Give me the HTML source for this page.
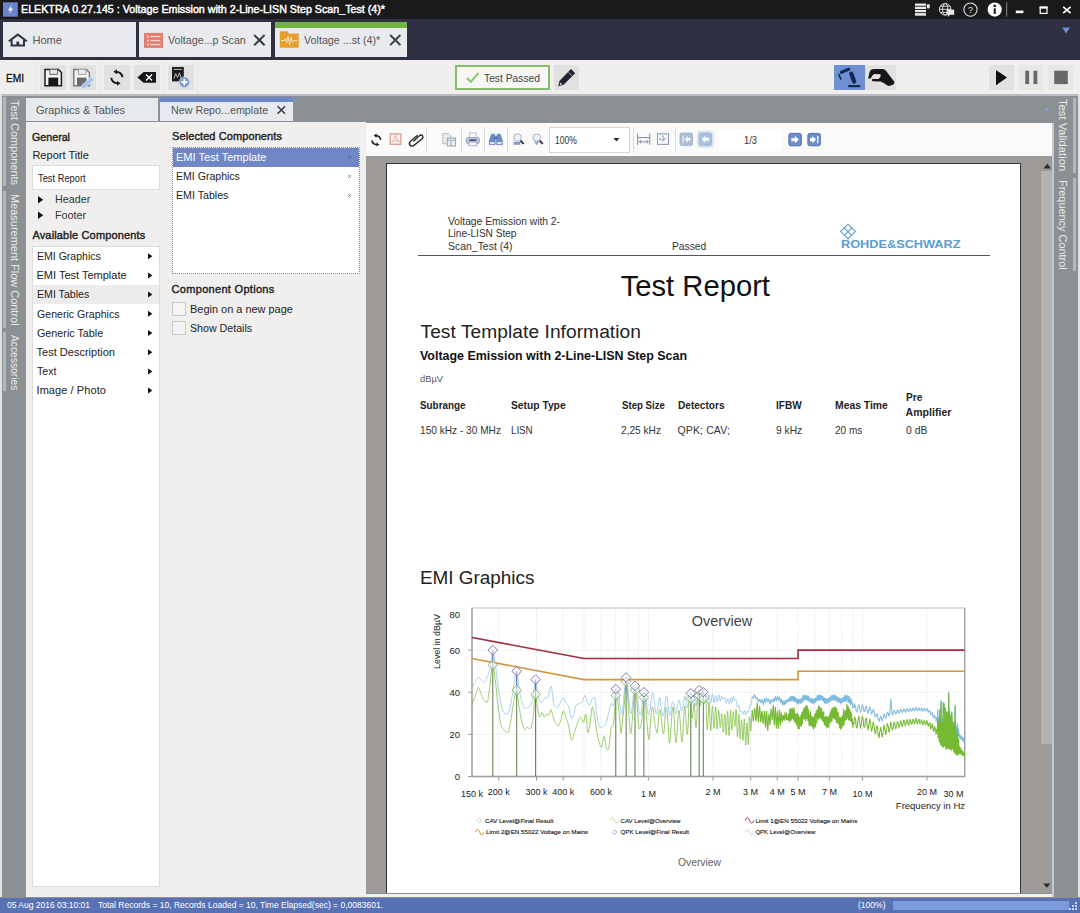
<!DOCTYPE html>
<html>
<head>
<meta charset="utf-8">
<title>ELEKTRA</title>
<style>
*{box-sizing:border-box;margin:0;padding:0}
html,body{width:1080px;height:913px;overflow:hidden;background:#8b9094;font-family:"Liberation Sans",sans-serif;color:#222}
.abs{position:absolute}
#app{position:relative;width:1080px;height:913px;overflow:hidden}
.tx{position:absolute;white-space:nowrap;font-family:"Liberation Sans",sans-serif}
.bx{position:absolute}
.vt{position:absolute;white-space:nowrap;color:#e9ecef;font-size:12.5px;line-height:14px;transform-origin:0 0;transform:rotate(90deg)}
.tri{position:absolute;width:0;height:0;border-left:5px solid #111;border-top:3.5px solid transparent;border-bottom:3.5px solid transparent}
.sep{position:absolute;width:1px;background:#dcdcdc}
.hd{position:absolute;width:3px;background:#b3b8bd}
</style>
</head>
<body>
<div id="app">

<!-- ===== window chrome ===== -->
<div class="bx" style="left:0;top:0;width:1080px;height:19px;background:#1a1a1c"></div>
<div class="bx" style="left:0;top:19px;width:1080px;height:41px;background:#2f3142"></div>
<div class="bx" style="left:0;top:59.7px;width:1080px;height:34.3px;background:#f0efed"></div>
<div class="bx" style="left:0;top:94px;width:1080px;height:803px;background:#8b9094"></div>
<div class="bx" style="left:0;top:897.5px;width:1080px;height:15.5px;background:#5871b4"></div>

<div class="bx" style="left:0;top:94px;width:1080px;height:2px;background:#b9bdc1"></div>
<!-- top tabs -->
<div class="bx" style="left:3px;top:22px;width:133px;height:34.5px;background:#e8eaed"></div>
<div class="bx" style="left:139px;top:22px;width:132px;height:34.5px;background:#e8eaed"></div>
<div class="bx" style="left:275px;top:22px;width:132px;height:34.5px;background:#e8eaed"></div>
<div class="bx" style="left:275px;top:22px;width:132px;height:6px;background:#6fb53f"></div>

<!-- toolbar buttons -->
<div class="bx" style="left:40px;top:65px;width:26px;height:25px;background:#e0e1e0"></div>
<div class="bx" style="left:70px;top:65px;width:26px;height:25px;background:#e0e1e0"></div>
<div class="bx" style="left:104px;top:65px;width:26px;height:25px;background:#e0e1e0"></div>
<div class="bx" style="left:134px;top:65px;width:26px;height:25px;background:#e0e1e0"></div>
<div class="bx" style="left:168px;top:65px;width:26px;height:25px;background:#e0e1e0"></div>
<div class="sep" style="left:36px;top:61px;height:32px;background:#e4e4e3"></div>
<div class="sep" style="left:100px;top:61px;height:32px;background:#e4e4e3"></div>
<div class="sep" style="left:164px;top:61px;height:32px;background:#e4e4e3"></div>
<div class="sep" style="left:197px;top:61px;height:32px;background:#e4e4e3"></div>
<div class="bx" style="left:455px;top:65px;width:95px;height:25px;background:#f5f6f5;border:2px solid #88bb6c"></div>
<div class="bx" style="left:554px;top:65px;width:25px;height:25px;background:#e0e1e0"></div>
<div class="bx" style="left:834px;top:65px;width:31px;height:25px;background:#6e90d2"></div>
<div class="bx" style="left:865px;top:65px;width:31px;height:25px;background:#e0e1e0"></div>
<div class="bx" style="left:989px;top:65px;width:25px;height:25px;background:#e0e1e0"></div>
<div class="bx" style="left:1018px;top:65px;width:25px;height:25px;background:#e7e7e5"></div>
<div class="bx" style="left:1048px;top:65px;width:25px;height:25px;background:#e7e7e5"></div>

<!-- ===== left strip ===== -->
<div class="bx" style="left:0;top:94px;width:2px;height:803px;background:#dfe1e3"></div>
<div class="hd" style="left:3px;top:97px;height:89px"></div>
<div class="hd" style="left:3px;top:191px;height:137px"></div>
<div class="hd" style="left:3px;top:332px;height:59px"></div>

<!-- ===== left panel ===== -->
<div class="bx" style="left:26px;top:122px;width:340px;height:775px;background:#f0efee"></div>
<div class="bx" style="left:26px;top:97px;width:133px;height:25px;background:#e6e9ed;border:1px solid #8b9094;border-left:none"></div>
<div class="bx" style="left:160px;top:97px;width:133px;height:25px;background:#e6e9ed;border-bottom:1px solid #8b9094"></div>
<div class="bx" style="left:160px;top:97px;width:133px;height:5px;background:#7087c7"></div>
<div class="bx" style="left:32px;top:165px;width:128px;height:25px;background:#fff;border:1px solid #dcdcdc"></div>
<div class="bx" style="left:32px;top:246px;width:128px;height:641px;background:#fff;border:1px solid #dcdcdc"></div>
<div class="bx" style="left:33px;top:285px;width:126px;height:19px;background:#ececec"></div>
<div class="bx" style="left:172px;top:147px;width:188px;height:127px;background:#fff;border:1px dotted #8a8a9a"></div>
<div class="bx" style="left:173px;top:148px;width:186px;height:19px;background:#7087c7"></div>
<div class="bx" style="left:172px;top:302px;width:14px;height:14px;background:#f4f4f4;border:1px solid #c9c9c9"></div>
<div class="bx" style="left:172px;top:321px;width:14px;height:14px;background:#f4f4f4;border:1px solid #c9c9c9"></div>

<!-- ===== report viewer ===== -->
<div class="bx" style="left:366px;top:123px;width:686px;height:33px;background:#fafafa"></div>
<div class="bx" style="left:366px;top:156px;width:686px;height:737px;background:#9e9a97"></div>
<div class="bx" style="left:366px;top:893.7px;width:686px;height:3.8px;background:#eef0ee"></div>
<div class="bx" style="left:386px;top:163px;width:635px;height:730px;background:#fff;border:1px solid #333;border-bottom:none"></div>
<div class="bx" style="left:1041px;top:171px;width:10.5px;height:573px;background:#b6b2af"></div>
<div class="bx" style="left:1052px;top:123px;width:1.5px;height:774px;background:#c5c8cc"></div>
<div class="bx" style="left:549px;top:127px;width:81px;height:26px;background:#fff;border:1px solid #d5d5d5"></div>
<div class="bx" style="left:718px;top:130px;width:64px;height:19px;background:#fff"></div>
<div class="sep" style="left:426px;top:127px;height:26px"></div>
<div class="sep" style="left:461px;top:127px;height:26px"></div>
<div class="sep" style="left:484px;top:127px;height:26px"></div>
<div class="sep" style="left:507px;top:127px;height:26px"></div>
<div class="sep" style="left:633px;top:127px;height:26px"></div>
<div class="sep" style="left:675px;top:127px;height:26px"></div>
<!-- page header rule -->
<div class="bx" style="left:418px;top:255px;width:572px;height:1px;background:#555"></div>

<!-- ===== right strip ===== -->
<div class="bx" style="left:1077.5px;top:94px;width:2.5px;height:803px;background:#dfe1e3"></div>
<div class="hd" style="left:1073px;top:98px;height:75px"></div>
<div class="hd" style="left:1073px;top:178px;height:93px"></div>

<!-- ===== status bar progress ===== -->
<div class="bx" style="left:893px;top:901px;width:176px;height:9px;background:#7b9bdc"></div>

<svg class="abs" style="left:0;top:0" width="1080" height="913" viewBox="0 0 1080 913" font-family="Liberation Sans, sans-serif">
<!-- app icon -->
<rect x="3" y="2.3" width="14.8" height="14.4" fill="#6b83d0"/>
<path d="M12 4.2 L8 10.6 H10.6 L9.2 14.4 L13 8.6 H10.6 Z" fill="#fff"/>
<!-- title bar right icons -->
<g fill="#e8e8e8">
<rect x="915" y="3.5" width="11" height="2.3"/><rect x="915" y="6.7" width="11" height="2.3"/><rect x="915" y="9.9" width="11" height="2.3"/><rect x="915" y="13.1" width="11" height="2.6"/>
<rect x="926.8" y="4.2" width="3" height="4.2" rx="0.8"/>
</g>
<g fill="none" stroke="#d8d8d8" stroke-width="1">
<circle cx="945.2" cy="9.3" r="5.8"/><ellipse cx="945.2" cy="9.3" rx="2.6" ry="5.8"/><path d="M939.4 9.3 H951 M940.3 6.2 H950.1 M940.3 12.4 H950.1"/>
</g>
<rect x="946.6" y="9.6" width="7.6" height="5.2" fill="#e8e8e8"/><path d="M948 14.6 v2.4 l2.2 -2.4 Z" fill="#e8e8e8"/>
<circle cx="970.5" cy="9.6" r="6.6" fill="none" stroke="#e0e0e0" stroke-width="1.1"/>
<text x="970.5" y="13.2" font-size="9.5" fill="#e0e0e0" text-anchor="middle">?</text>
<circle cx="994.7" cy="9.6" r="7.1" fill="#fdfdfd"/>
<rect x="993.7" y="8.3" width="2.1" height="5.6" fill="#1a1a1c"/><circle cx="994.7" cy="5.9" r="1.3" fill="#1a1a1c"/>
<rect x="1006.2" y="2.5" width="1" height="14" fill="#8c8c8c"/>
<rect x="1015.8" y="10.6" width="7.6" height="2.6" fill="#fff"/>
<rect x="1040.2" y="7.6" width="6.8" height="5.8" fill="none" stroke="#fff" stroke-width="1.2"/><rect x="1039.6" y="6.3" width="8" height="2.2" fill="#fff"/>
<path d="M1063.2 6.8 L1070.6 13.2 M1070.6 6.8 L1063.2 13.2" stroke="#fff" stroke-width="1.7" fill="none"/>
<path d="M1062.3 27.6 H1069.9 L1066.1 33.6 Z" fill="#6f8fd8"/>
<!-- top tab icons -->
<g fill="none" stroke="#2f3445" stroke-width="2" stroke-linejoin="miter">
<path d="M8.8 41.2 L17.8 34.6 L26.8 41.2"/><path d="M11.6 39.8 V45.6 H24 V39.8"/>
</g>
<rect x="16.4" y="41.6" width="2.8" height="4" fill="#2f3445"/>
<rect x="144" y="32.9" width="19" height="15" fill="#e07f72"/>
<g fill="#f7d9d4"><rect x="147" y="35.6" width="1.8" height="1.8"/><rect x="150.4" y="35.9" width="10" height="1.3"/><rect x="147" y="39.6" width="1.8" height="1.8"/><rect x="150.4" y="39.9" width="10" height="1.3"/><rect x="147" y="43.6" width="1.8" height="1.8"/><rect x="150.4" y="43.9" width="10" height="1.3"/></g>
<path d="M279.8 31.2 H287.2 L288.8 33.4 H298.8 V47.8 H279.8 Z" fill="#e3a02f"/>
<path d="M281 40.6 H284.4 L285.4 38.6 L286.6 43 L288 36.6 L289.6 45 L291 37.4 L292.4 42.4 L293.4 40.6 H297.4" fill="none" stroke="#fbe8c4" stroke-width="0.9"/>
<g stroke="#333a4a" stroke-width="1.9" fill="none"><path d="M254.2 35 L264.6 45.2 M264.6 35 L254.2 45.2"/><path d="M390.2 35 L400.4 45.2 M400.4 35 L390.2 45.2"/></g>
<!-- toolbar: save -->
<path d="M45 69.5 H58.4 L61.4 72.6 V85.7 H45 Z" fill="#f3f3f3" stroke="#1d1d22" stroke-width="1.5"/>
<rect x="48.4" y="77.6" width="9.8" height="8.4" fill="#15151a"/>
<path d="M49.8 69.6 V74.4 H57.6 V69.6" fill="#e6e6e6" stroke="#555" stroke-width="0.9"/>
<!-- save as -->
<path d="M73.8 69.5 H86.4 L89.4 72.6 V85.7 H73.8 Z" fill="#f3f3f3" stroke="#77777c" stroke-width="1.4"/>
<rect x="77" y="77.6" width="9.6" height="8.2" fill="#6a6a70"/>
<path d="M78.4 69.6 V74.4 H86 V69.6" fill="#ececec" stroke="#999" stroke-width="0.9"/>
<path d="M91 76.6 L94.2 79.8 L84.6 88.6 L81 89.4 L81.6 85.8 Z" fill="#a9c5ee" stroke="#e8f0fb" stroke-width="0.7"/>
<!-- refresh -->
<g fill="none" stroke="#15151a" stroke-width="1.9">
<path d="M116.2 72 A5.5 5.5 0 0 1 122.4 77.2"/><path d="M111.3 77.8 A5.5 5.5 0 0 0 117.4 83.1"/>
</g>
<path d="M113.4 71.7 L117 69.2 V74.2 Z" fill="#15151a"/><path d="M120.6 83.2 L117 80.9 V85.7 Z" fill="#15151a"/>
<!-- backspace -->
<path d="M137.4 77.4 L143.6 72 H156 V82.8 H143.6 Z" fill="#15151a"/>
<path d="M146 74.4 L152 80.4 M152 74.4 L146 80.4" stroke="#fff" stroke-width="1.4"/>
<!-- report add -->
<rect x="172" y="67" width="11.8" height="14.4" fill="#1d1d22"/>
<path d="M173.6 69.4 H182 M174 78.6 L175.6 73.6 L177.6 77.6 L179.4 72.8 L181.4 78.6" stroke="#ddd" stroke-width="0.8" fill="none"/>
<circle cx="184.3" cy="82.2" r="5.2" fill="#7a9bd6" stroke="#c5d4ee" stroke-width="0.8"/>
<path d="M181.2 82.2 H187.4 M184.3 79.1 V85.3" stroke="#fff" stroke-width="1.7"/>
<!-- check -->
<path d="M467 78 L470.8 81.8 L478.4 73" fill="none" stroke="#8cc56a" stroke-width="2"/>
<!-- pencil -->
<path d="M571 69 L575.2 73.2 L563.6 84.8 L558.2 86.2 L559.6 80.8 Z" fill="#1f2430"/>
<path d="M560.3 82.4 L562.2 84.2 L559.6 85 Z" fill="#e0e1e0"/><path d="M568.6 72.4 L571.8 75.6" stroke="#e0e1e0" stroke-width="0.8"/>
<!-- robot arm -->
<g stroke="#14284f" fill="none" stroke-linecap="round">
<path d="M841.4 72.4 L848.8 69.2" stroke-width="3"/>
<path d="M851.2 73.6 L854.2 81.6" stroke-width="4.2"/>
<path d="M838.8 74.4 L840.8 79" stroke-width="1.6"/>
</g>
<rect x="848.2" y="85" width="12" height="2.2" fill="#14284f"/>
<!-- hand -->
<path d="M868.2 78.6 L869.6 72 Q870.6 69 874 69 H882.6 Q884.6 69 886 70.8 L891 77.6 Q892.6 79.6 894.2 81.6 Q895 83.4 893.4 84.4 L889.8 85.8 Q888.2 86.2 887 85.2 Q883.6 82.6 880.6 81.4 L872.6 81.2 Q871 80.2 872.4 79 L878.6 79 Q881.4 76.6 880.6 74.2 L874.6 74 Q872.2 74.6 870.8 78.6 Z" fill="#15151a"/>
<!-- play / pause / stop -->
<path d="M996 70 L1007 77.6 L996 85.2 Z" fill="#111115"/>
<rect x="1025.3" y="70.7" width="3.8" height="13.4" fill="#676767"/><rect x="1033.5" y="70.7" width="3.8" height="13.4" fill="#676767"/>
<rect x="1054.2" y="70.7" width="13.6" height="13.4" fill="#676767"/>
<!-- left panel tab close -->
<path d="M277.6 106.2 L285 113.8 M285 106.2 L277.6 113.8" stroke="#333a4a" stroke-width="1.5"/>
<!-- header/footer triangles -->
<path d="M38 196 L43.2 199.8 L38 203.6 Z" fill="#111"/><path d="M38 211.4 L43.2 215.2 L38 219 Z" fill="#111"/>
<!-- list arrows -->
<g fill="#111">
<path d="M148 253.2 L152.4 256.2 L148 259.2 Z"/><path d="M148 272.4 L152.4 275.4 L148 278.4 Z"/><path d="M148 291.6 L152.4 294.6 L148 297.6 Z"/><path d="M148 310.8 L152.4 313.8 L148 316.8 Z"/>
<path d="M148 330 L152.4 333 L148 336 Z"/><path d="M148 349.2 L152.4 352.2 L148 355.2 Z"/><path d="M148 368.4 L152.4 371.4 L148 374.4 Z"/><path d="M148 387.6 L152.4 390.6 L148 393.6 Z"/>
</g>
<!-- selected list x marks -->
<g stroke="#777" stroke-width="0.8"><path d="M348 155.8 L351.2 159 M351.2 155.8 L348 159" stroke="#4a63a0"/><path d="M348 174.8 L351.2 178 M351.2 174.8 L348 178"/><path d="M348 193.8 L351.2 197 M351.2 193.8 L348 197"/></g>
<!-- ===== report toolbar icons ===== -->
<g fill="none" stroke="#1d1d22" stroke-width="1.6">
<path d="M376 135.8 A4.3 4.3 0 0 1 380.7 139.9"/><path d="M372 140.4 A4.3 4.3 0 0 0 376.7 144.5"/>
</g>
<path d="M373.6 135.6 L376.6 133.5 V137.7 Z" fill="#1d1d22"/><path d="M379.4 144.6 L376.4 142.6 V146.6 Z" fill="#1d1d22"/>
<rect x="390.3" y="133.9" width="10.6" height="10.4" fill="#fbf3f1" stroke="#d9a294" stroke-width="1.4"/>
<path d="M395.6 135.4 Q394.6 139.4 391.8 142.8 M395.6 135.4 Q396.8 139.6 399.6 142.6 M392.4 141.6 Q395.6 139.8 399.2 141.4" stroke="#dba89b" stroke-width="0.9" fill="none"/>
<path d="M413.2 141.6 L419.4 135.8 Q421.4 134.2 422.6 135.8 Q423.6 137.4 421.8 139 L414 145.4 Q411.4 147 409.8 145 Q408.6 142.8 410.8 141 L417.6 135.2" fill="none" stroke="#2a2a2e" stroke-width="1.4"/>
<!-- copy -->
<path d="M442.8 133.6 H448.6 L451 136 V143.8 H442.8 Z" fill="#eceeee" stroke="#b4babd" stroke-width="0.9"/>
<rect x="447.2" y="138" width="8.4" height="8" fill="#e8eef2" stroke="#8fa0ab" stroke-width="0.9"/><path d="M447.2 140.2 H455.6 M451 140.2 V146" stroke="#8fa0ab" stroke-width="0.8"/>
<!-- printer -->
<rect x="469.6" y="132.8" width="6.6" height="5.4" fill="#f2f5fa" stroke="#aab4cc" stroke-width="0.8"/>
<rect x="466.2" y="137.6" width="13.2" height="5.8" rx="1.6" fill="#b9c3da" stroke="#8e9ab8" stroke-width="0.8"/>
<rect x="469.2" y="139.4" width="7.2" height="1.6" fill="#4a5270"/>
<rect x="468.8" y="142" width="8" height="3.8" fill="#eef1f7" stroke="#9aa5c0" stroke-width="0.8"/>
<!-- binoculars -->
<g fill="#6c8cc4" stroke="#4f6ea8" stroke-width="0.6">
<path d="M491.6 134.2 H494.6 L495.2 139 V144.6 H489.4 V141 Z"/><path d="M497.2 134.2 H500.2 L502.4 141 V144.6 H496.6 V139 Z"/>
</g>
<rect x="494.4" y="136.4" width="3" height="2.6" fill="#4f6ea8"/>
<rect x="490" y="142" width="4.6" height="2" fill="#d9e2f3"/><rect x="497.2" y="142" width="4.6" height="2" fill="#d9e2f3"/>
<!-- zoom in / out -->
<circle cx="517.6" cy="137.6" r="3.8" fill="#eef2f7" stroke="#9fb0c8" stroke-width="1"/>
<path d="M520.4 140.6 L523.6 143.8" stroke="#26262c" stroke-width="1.8"/>
<rect x="513.6" y="142" width="6.6" height="2.8" fill="#7f9bc8"/>
<circle cx="536.8" cy="137.6" r="3.8" fill="#eef2f7" stroke="#9fb0c8" stroke-width="1"/>
<path d="M539.6 140.6 L542.8 143.8" stroke="#26262c" stroke-width="1.8"/>
<path d="M534 141.6 H539.4 L536.7 145.2 Z" fill="#8fa6c8"/>
<!-- combobox arrow -->
<path d="M613.4 138 H619.4 L616.4 141.4 Z" fill="#26262c"/>
<!-- fit width -->
<g stroke="#7d8aa3" stroke-width="1" fill="none"><path d="M637.6 133.4 V144.8 M649.8 133.4 V144.8 M637.6 137.6 H649.8 M639 141.8 H648.6"/><path d="M641.2 140.2 L639.4 141.8 L641.2 143.4 M646.4 140.2 L648.2 141.8 L646.4 143.4"/></g>
<!-- fit page -->
<rect x="657.5" y="133.8" width="11" height="10.6" fill="#f0f3f8" stroke="#8c98b0" stroke-width="1"/>
<path d="M663 135.4 V142.8 M659.2 139.1 H666.8" stroke="#6f7fa0" stroke-width="1" stroke-dasharray="2.2,1.6"/>
<!-- first / prev -->
<rect x="680" y="133" width="12.6" height="12.6" rx="1.8" fill="#aebfd6" stroke="#9db0ca" stroke-width="0.8"/>
<path d="M683 135.8 V142.8" stroke="#eef3f9" stroke-width="1.2"/><path d="M684.6 139.3 L688 136 V138 H690.6 V140.6 H688 V142.6 Z" fill="#f4f7fb"/>
<rect x="697.4" y="131.2" width="16" height="16" rx="2" fill="#e4ecf5" stroke="#d2deec" stroke-width="0.8"/>
<rect x="699" y="133" width="12.6" height="12.6" rx="1.8" fill="#a9c2de" stroke="#97b3d4" stroke-width="0.8"/>
<path d="M701.6 139.3 L705.4 135.8 V137.8 H709 V140.8 H705.4 V142.8 Z" fill="#f4f7fb"/>
<!-- next / last -->
<rect x="788.9" y="133.4" width="12.4" height="12.4" rx="1.8" fill="#6f8dc8" stroke="#506eae" stroke-width="1"/>
<path d="M798.8 139.6 L795 136 V138 H791.4 V141.2 H795 V143.2 Z" fill="#fff"/>
<rect x="807.9" y="133.4" width="12.4" height="12.4" rx="1.8" fill="#6f8dc8" stroke="#506eae" stroke-width="1"/>
<path d="M816 139.6 L812.4 136 V138 H810 V141.2 H812.4 V143.2 Z" fill="#fff"/><path d="M817.8 136 V143.2" stroke="#fff" stroke-width="1.3"/>
<!-- scrollbar arrows & small blue triangle -->
<path d="M1043.6 168.4 H1051 L1047.3 163.8 Z" fill="#2a2a2a"/>
<path d="M1043.2 883.4 H1050.4 L1046.8 887.8 Z" fill="#2a2a2a"/>
<path d="M1044.6 108 H1049.4 L1047 111.6 Z" fill="#7f9fe0"/>
<!-- R&S logo diamond -->
<g fill="none" stroke="#5b9bd5" stroke-width="1.1">
<path d="M848 224.2 L855.4 231.6 L848 239 L840.6 231.6 Z"/>
<path d="M844.3 227.9 L851.7 235.3 M851.7 227.9 L844.3 235.3"/>
</g>
<!-- resize grip -->
<g fill="#c9d6f0"><rect x="1075" y="908" width="2" height="2"/><rect x="1072" y="908" width="2" height="2"/><rect x="1075" y="905" width="2" height="2"/><rect x="1069" y="908" width="2" height="2"/><rect x="1072" y="905" width="2" height="2"/><rect x="1075" y="902" width="2" height="2"/></g>
</svg>


<div class="tx" style="left:21.0px;top:2.0px;font-size:11px;line-height:15px;transform:scaleX(0.9727);transform-origin:0 0;color:#fff;-webkit-text-stroke:0.45px #fff;">ELEKTRA 0.27.145 : Voltage Emission with 2-Line-LISN Step Scan_Test (4)*</div>
<div class="tx" style="left:32.4px;top:32.9px;font-size:11px;line-height:15px;letter-spacing:0.064px;color:#555;">Home</div>
<div class="tx" style="left:167.8px;top:32.9px;font-size:11px;line-height:15px;transform:scaleX(0.9710);transform-origin:0 0;color:#555;">Voltage...p Scan</div>
<div class="tx" style="left:303.7px;top:32.9px;font-size:11px;line-height:15px;transform:scaleX(0.9749);transform-origin:0 0;color:#555;">Voltage ...st (4)*</div>
<div class="tx" style="left:6.0px;top:71.1px;font-size:11px;line-height:15px;transform:scaleX(0.9201);transform-origin:0 0;color:#111;-webkit-text-stroke:0.3px #111;">EMI</div>
<div class="tx" style="left:484.0px;top:70.5px;font-size:11px;line-height:15px;transform:scaleX(0.9346);transform-origin:0 0;color:#444;">Test Passed</div>
<div class="tx" style="left:36.0px;top:102.5px;font-size:11px;line-height:15px;transform:scaleX(0.9991);transform-origin:0 0;color:#555;">Graphics &amp; Tables</div>
<div class="tx" style="left:170.7px;top:102.7px;font-size:11px;line-height:15px;transform:scaleX(0.9742);transform-origin:0 0;color:#555;">New Repo...emplate</div>
<div class="tx" style="left:32.4px;top:129.5px;font-size:11px;line-height:15px;transform:scaleX(0.9709);transform-origin:0 0;color:#222;-webkit-text-stroke:0.4px #222;">General</div>
<div class="tx" style="left:32.4px;top:147.5px;font-size:11px;line-height:15px;letter-spacing:0.021px;color:#222;">Report Title</div>
<div class="tx" style="left:38.0px;top:170.5px;font-size:10.5px;line-height:15px;transform:scaleX(0.8864);transform-origin:0 0;color:#222;">Test Report</div>
<div class="tx" style="left:54.6px;top:192.1px;font-size:11px;line-height:15px;transform:scaleX(0.9757);transform-origin:0 0;color:#333;">Header</div>
<div class="tx" style="left:54.6px;top:207.5px;font-size:11px;line-height:15px;transform:scaleX(0.9781);transform-origin:0 0;color:#333;">Footer</div>
<div class="tx" style="left:32.4px;top:228.0px;font-size:11px;line-height:15px;letter-spacing:0.161px;color:#222;-webkit-text-stroke:0.4px #222;">Available Components</div>
<div class="tx" style="left:36.5px;top:248.9px;font-size:11px;line-height:15px;transform:scaleX(0.9574);transform-origin:0 0;color:#222;">EMI Graphics</div>
<div class="tx" style="left:36.5px;top:268.1px;font-size:11px;line-height:15px;letter-spacing:0.000px;color:#222;">EMI Test Template</div>
<div class="tx" style="left:36.5px;top:287.3px;font-size:11px;line-height:15px;transform:scaleX(0.9646);transform-origin:0 0;color:#222;">EMI Tables</div>
<div class="tx" style="left:36.5px;top:306.5px;font-size:11px;line-height:15px;transform:scaleX(0.9639);transform-origin:0 0;color:#222;">Generic Graphics</div>
<div class="tx" style="left:36.5px;top:325.7px;font-size:11px;line-height:15px;transform:scaleX(0.9782);transform-origin:0 0;color:#222;">Generic Table</div>
<div class="tx" style="left:36.5px;top:344.9px;font-size:11px;line-height:15px;letter-spacing:0.015px;color:#222;">Test Description</div>
<div class="tx" style="left:36.5px;top:364.1px;font-size:11px;line-height:15px;transform:scaleX(0.9659);transform-origin:0 0;color:#222;">Text</div>
<div class="tx" style="left:36.5px;top:383.3px;font-size:11px;line-height:15px;letter-spacing:0.077px;color:#222;">Image / Photo</div>
<div class="tx" style="left:172.0px;top:129.3px;font-size:11px;line-height:15px;letter-spacing:0.093px;color:#222;-webkit-text-stroke:0.4px #222;">Selected Components</div>
<div class="tx" style="left:176.0px;top:150.2px;font-size:11px;line-height:15px;letter-spacing:0.024px;color:#fff;">EMI Test Template</div>
<div class="tx" style="left:176.0px;top:169.4px;font-size:11px;line-height:15px;transform:scaleX(0.9589);transform-origin:0 0;color:#222;">EMI Graphics</div>
<div class="tx" style="left:176.0px;top:188.3px;font-size:11px;line-height:15px;transform:scaleX(0.9665);transform-origin:0 0;color:#222;">EMI Tables</div>
<div class="tx" style="left:171.6px;top:282.3px;font-size:11px;line-height:15px;letter-spacing:0.303px;color:#222;-webkit-text-stroke:0.4px #222;">Component Options</div>
<div class="tx" style="left:189.7px;top:301.8px;font-size:11px;line-height:15px;transform:scaleX(0.9954);transform-origin:0 0;color:#222;">Begin on a new page</div>
<div class="tx" style="left:189.7px;top:320.9px;font-size:11px;line-height:15px;transform:scaleX(0.9672);transform-origin:0 0;color:#222;">Show Details</div>
<div class="tx" style="left:555.0px;top:134.0px;font-size:10px;line-height:14px;transform:scaleX(0.8601);transform-origin:0 0;color:#333;">100%</div>
<div class="tx" style="left:743.9px;top:133.7px;font-size:10px;line-height:14px;transform:scaleX(0.9348);transform-origin:0 0;color:#333;">1/3</div>
<div class="tx" style="left:448.0px;top:214.1px;font-size:10.5px;line-height:15px;transform:scaleX(0.9791);transform-origin:0 0;color:#333;">Voltage Emission with 2-</div>
<div class="tx" style="left:448.0px;top:226.0px;font-size:10.5px;line-height:15px;transform:scaleX(0.9618);transform-origin:0 0;color:#333;">Line-LISN Step</div>
<div class="tx" style="left:448.0px;top:238.5px;font-size:10.5px;line-height:15px;transform:scaleX(0.9957);transform-origin:0 0;color:#333;">Scan_Test (4)</div>
<div class="tx" style="left:671.7px;top:238.5px;font-size:10.5px;line-height:15px;transform:scaleX(0.9791);transform-origin:0 0;color:#333;">Passed</div>
<div class="tx" style="left:620.7px;top:268.0px;font-size:29.2px;line-height:37px;letter-spacing:0.005px;color:#111;">Test Report</div>
<div class="tx" style="left:420.5px;top:319.0px;font-size:19.2px;line-height:25px;letter-spacing:0.046px;color:#222;">Test Template Information</div>
<div class="tx" style="left:420.0px;top:347.5px;font-size:12.5px;line-height:17px;transform:scaleX(0.9942);transform-origin:0 0;color:#111;font-weight:bold;">Voltage Emission with 2-Line-LISN Step Scan</div>
<div class="tx" style="left:420.0px;top:372.9px;font-size:9.3px;line-height:13px;letter-spacing:0.016px;color:#555;">dBµV</div>
<div class="tx" style="left:420.0px;top:397.8px;font-size:10.5px;line-height:15px;transform:scaleX(0.9394);transform-origin:0 0;color:#222;font-weight:bold;">Subrange</div>
<div class="tx" style="left:511.4px;top:397.8px;font-size:10.5px;line-height:15px;transform:scaleX(0.9783);transform-origin:0 0;color:#222;font-weight:bold;">Setup Type</div>
<div class="tx" style="left:621.7px;top:397.8px;font-size:10.5px;line-height:15px;transform:scaleX(0.9167);transform-origin:0 0;color:#222;font-weight:bold;">Step Size</div>
<div class="tx" style="left:677.5px;top:397.8px;font-size:10.5px;line-height:15px;transform:scaleX(0.9600);transform-origin:0 0;color:#222;font-weight:bold;">Detectors</div>
<div class="tx" style="left:775.8px;top:397.8px;font-size:10.5px;line-height:15px;transform:scaleX(0.9542);transform-origin:0 0;color:#222;font-weight:bold;">IFBW</div>
<div class="tx" style="left:834.7px;top:397.8px;font-size:10.5px;line-height:15px;transform:scaleX(0.9869);transform-origin:0 0;color:#222;font-weight:bold;">Meas Time</div>
<div class="tx" style="left:905.6px;top:390.3px;font-size:10.5px;line-height:15px;transform:scaleX(0.9683);transform-origin:0 0;color:#222;font-weight:bold;">Pre</div>
<div class="tx" style="left:905.6px;top:405.0px;font-size:10.5px;line-height:15px;letter-spacing:0.032px;color:#222;font-weight:bold;">Amplifier</div>
<div class="tx" style="left:420.0px;top:422.8px;font-size:10.5px;line-height:15px;transform:scaleX(0.9639);transform-origin:0 0;color:#333;">150 kHz - 30 MHz</div>
<div class="tx" style="left:511.4px;top:422.8px;font-size:10.5px;line-height:15px;transform:scaleX(0.9253);transform-origin:0 0;color:#333;">LISN</div>
<div class="tx" style="left:621.4px;top:422.8px;font-size:10.5px;line-height:15px;transform:scaleX(0.9653);transform-origin:0 0;color:#333;">2,25 kHz</div>
<div class="tx" style="left:677.5px;top:422.8px;font-size:10.5px;line-height:15px;letter-spacing:0.127px;color:#333;">QPK; CAV;</div>
<div class="tx" style="left:775.8px;top:422.8px;font-size:10.5px;line-height:15px;transform:scaleX(0.9760);transform-origin:0 0;color:#333;">9 kHz</div>
<div class="tx" style="left:834.7px;top:422.8px;font-size:10.5px;line-height:15px;transform:scaleX(0.9548);transform-origin:0 0;color:#333;">20 ms</div>
<div class="tx" style="left:905.6px;top:422.8px;font-size:10.5px;line-height:15px;transform:scaleX(0.9903);transform-origin:0 0;color:#333;">0 dB</div>
<div class="tx" style="left:419.6px;top:564.5px;font-size:18.9px;line-height:25px;transform:scaleX(0.9997);transform-origin:0 0;color:#222;">EMI Graphics</div>
<div class="tx" style="left:677.5px;top:854.5px;font-size:10.5px;line-height:15px;transform:scaleX(0.9825);transform-origin:0 0;color:#606060;">Overview</div>
<div class="tx" style="left:840.5px;top:236.5px;font-size:11px;line-height:15px;transform:scaleX(1.1570);transform-origin:0 0;color:#5b9bd5;font-weight:bold;">ROHDE&amp;SCHWARZ</div>
<div class="tx" style="left:23.0px;top:99.6px;font-size:11.5px;line-height:16px;color:#e9ecef;transform-origin:0 0;transform:rotate(90deg) scaleX(0.9508);">Test Components</div>
<div class="tx" style="left:23.0px;top:194.4px;font-size:11.5px;line-height:16px;color:#e9ecef;transform-origin:0 0;transform:rotate(90deg) scaleX(0.9532);">Measurement Flow Control</div>
<div class="tx" style="left:23.0px;top:334.9px;font-size:11.5px;line-height:16px;color:#e9ecef;transform-origin:0 0;transform:rotate(90deg) scaleX(0.8919);">Accessories</div>
<div class="tx" style="left:1071.0px;top:98.8px;font-size:11.5px;line-height:16px;color:#e9ecef;transform-origin:0 0;transform:rotate(90deg) scaleX(0.9763);">Test Validation</div>
<div class="tx" style="left:1071.0px;top:179.7px;font-size:11.5px;line-height:16px;color:#e9ecef;transform-origin:0 0;transform:rotate(90deg) scaleX(0.9481);">Frequency Control</div>
<div class="tx" style="left:7.0px;top:899.0px;font-size:9px;line-height:13px;transform:scaleX(0.9422);transform-origin:0 0;color:#fff;">05 Aug 2016 03:10:01</div>
<div class="tx" style="left:98.0px;top:899.0px;font-size:9px;line-height:13px;transform:scaleX(0.9455);transform-origin:0 0;color:#fff;">Total Records = 10, Records Loaded = 10, Time Elapsed(sec) = 0,0083601.</div>
<div class="tx" style="left:858.0px;top:899.0px;font-size:9px;line-height:13px;transform:scaleX(0.9478);transform-origin:0 0;color:#fff;">(100%)</div>

<svg class="abs" style="left:410px;top:600px" width="560" height="270" viewBox="410 600 560 270" font-family="Liberation Sans, sans-serif">
<line x1="498.8" y1="608.0" x2="498.8" y2="776.5" stroke="#e4e4e4" stroke-width="1" stroke-dasharray="1.5,1.5"/>
<line x1="536.5" y1="608.0" x2="536.5" y2="776.5" stroke="#e4e4e4" stroke-width="1" stroke-dasharray="1.5,1.5"/>
<line x1="563.2" y1="608.0" x2="563.2" y2="776.5" stroke="#e4e4e4" stroke-width="1" stroke-dasharray="1.5,1.5"/>
<line x1="584.0" y1="608.0" x2="584.0" y2="776.5" stroke="#e4e4e4" stroke-width="1" stroke-dasharray="1.5,1.5"/>
<line x1="600.9" y1="608.0" x2="600.9" y2="776.5" stroke="#e4e4e4" stroke-width="1" stroke-dasharray="1.5,1.5"/>
<line x1="615.2" y1="608.0" x2="615.2" y2="776.5" stroke="#e4e4e4" stroke-width="1" stroke-dasharray="1.5,1.5"/>
<line x1="627.7" y1="608.0" x2="627.7" y2="776.5" stroke="#e4e4e4" stroke-width="1" stroke-dasharray="1.5,1.5"/>
<line x1="638.6" y1="608.0" x2="638.6" y2="776.5" stroke="#e4e4e4" stroke-width="1" stroke-dasharray="1.5,1.5"/>
<line x1="648.4" y1="608.0" x2="648.4" y2="776.5" stroke="#e4e4e4" stroke-width="1" stroke-dasharray="1.5,1.5"/>
<line x1="712.9" y1="608.0" x2="712.9" y2="776.5" stroke="#e4e4e4" stroke-width="1" stroke-dasharray="1.5,1.5"/>
<line x1="750.6" y1="608.0" x2="750.6" y2="776.5" stroke="#e4e4e4" stroke-width="1" stroke-dasharray="1.5,1.5"/>
<line x1="777.3" y1="608.0" x2="777.3" y2="776.5" stroke="#e4e4e4" stroke-width="1" stroke-dasharray="1.5,1.5"/>
<line x1="798.1" y1="608.0" x2="798.1" y2="776.5" stroke="#e4e4e4" stroke-width="1" stroke-dasharray="1.5,1.5"/>
<line x1="815.0" y1="608.0" x2="815.0" y2="776.5" stroke="#e4e4e4" stroke-width="1" stroke-dasharray="1.5,1.5"/>
<line x1="829.4" y1="608.0" x2="829.4" y2="776.5" stroke="#e4e4e4" stroke-width="1" stroke-dasharray="1.5,1.5"/>
<line x1="841.8" y1="608.0" x2="841.8" y2="776.5" stroke="#e4e4e4" stroke-width="1" stroke-dasharray="1.5,1.5"/>
<line x1="852.7" y1="608.0" x2="852.7" y2="776.5" stroke="#e4e4e4" stroke-width="1" stroke-dasharray="1.5,1.5"/>
<line x1="862.5" y1="608.0" x2="862.5" y2="776.5" stroke="#e4e4e4" stroke-width="1" stroke-dasharray="1.5,1.5"/>
<line x1="927.0" y1="608.0" x2="927.0" y2="776.5" stroke="#e4e4e4" stroke-width="1" stroke-dasharray="1.5,1.5"/>
<line x1="472.0" y1="734.4" x2="964.7" y2="734.4" stroke="#e4e4e4" stroke-width="1" stroke-dasharray="1.5,1.5"/>
<line x1="472.0" y1="692.2" x2="964.7" y2="692.2" stroke="#e4e4e4" stroke-width="1" stroke-dasharray="1.5,1.5"/>
<line x1="472.0" y1="650.1" x2="964.7" y2="650.1" stroke="#e4e4e4" stroke-width="1" stroke-dasharray="1.5,1.5"/>
<rect x="472.0" y="608.0" width="492.7" height="168.5" fill="none" stroke="#c8c8c8" stroke-width="1.2"/>
<path d="M472.0,608.0 V776.5 H964.7 V608.0" fill="none" stroke="#a0a0a0" stroke-width="1.3"/>
<line x1="468.0" y1="776.5" x2="472.0" y2="776.5" stroke="#999" stroke-width="1"/>
<line x1="468.0" y1="734.4" x2="472.0" y2="734.4" stroke="#999" stroke-width="1"/>
<line x1="468.0" y1="692.2" x2="472.0" y2="692.2" stroke="#999" stroke-width="1"/>
<line x1="468.0" y1="650.1" x2="472.0" y2="650.1" stroke="#999" stroke-width="1"/>
<line x1="498.8" y1="776.5" x2="498.8" y2="780.5" stroke="#999" stroke-width="1"/>
<line x1="536.5" y1="776.5" x2="536.5" y2="780.5" stroke="#999" stroke-width="1"/>
<line x1="563.2" y1="776.5" x2="563.2" y2="780.5" stroke="#999" stroke-width="1"/>
<line x1="600.9" y1="776.5" x2="600.9" y2="780.5" stroke="#999" stroke-width="1"/>
<line x1="648.4" y1="776.5" x2="648.4" y2="780.5" stroke="#999" stroke-width="1"/>
<line x1="712.9" y1="776.5" x2="712.9" y2="780.5" stroke="#999" stroke-width="1"/>
<line x1="750.6" y1="776.5" x2="750.6" y2="780.5" stroke="#999" stroke-width="1"/>
<line x1="777.3" y1="776.5" x2="777.3" y2="780.5" stroke="#999" stroke-width="1"/>
<line x1="798.1" y1="776.5" x2="798.1" y2="780.5" stroke="#999" stroke-width="1"/>
<line x1="829.4" y1="776.5" x2="829.4" y2="780.5" stroke="#999" stroke-width="1"/>
<line x1="862.5" y1="776.5" x2="862.5" y2="780.5" stroke="#999" stroke-width="1"/>
<line x1="927.0" y1="776.5" x2="927.0" y2="780.5" stroke="#999" stroke-width="1"/>
<path d="M472.0,688.9 L472.3,688.1 L472.5,687.3 L472.8,686.6 L473.1,685.9 L473.4,685.2 L473.6,684.6 L473.9,683.9 L474.2,683.3 L474.5,682.8 L474.7,682.2 L475.0,681.7 L475.3,681.2 L475.6,680.8 L475.8,680.4 L476.1,680.0 L476.4,679.6 L476.7,679.3 L476.9,678.9 L477.2,678.5 L477.5,678.2 L477.8,678.0 L478.0,677.8 L478.3,677.8 L478.6,677.8 L478.8,677.9 L479.1,678.0 L479.4,678.2 L479.7,678.5 L479.9,678.7 L480.2,679.0 L480.5,679.3 L480.8,679.5 L481.0,679.8 L481.3,680.0 L481.6,680.2 L481.9,680.5 L482.1,680.8 L482.4,681.0 L482.7,681.3 L483.0,681.6 L483.2,681.8 L483.5,682.0 L483.8,682.1 L484.1,682.2 L484.3,682.2 L484.6,682.1 L484.9,681.9 L485.1,681.5 L485.4,681.1 L485.7,680.5 L486.0,680.0 L486.2,679.3 L486.5,678.7 L486.8,678.0 L487.1,677.4 L487.3,676.8 L487.6,676.1 L487.9,675.5 L488.2,674.8 L488.4,674.0 L488.7,673.2 L489.0,672.3 L489.3,671.4 L489.5,670.4 L489.8,669.4 L490.1,668.2 L490.3,666.9 L490.6,665.1 L490.9,662.9 L491.2,660.6 L491.4,658.1 L491.7,655.7 L492.0,653.6 L492.3,651.8 L492.5,650.6 L492.8,650.1 L493.1,650.4 L493.4,651.2 L493.6,652.5 L493.9,654.1 L494.2,656.0 L494.5,658.0 L494.7,660.1 L495.0,662.2 L495.3,664.1 L495.6,666.0 L495.8,668.0 L496.1,670.2 L496.4,672.6 L496.6,675.0 L496.9,677.4 L497.2,679.9 L497.5,682.2 L497.7,684.5 L498.0,686.7 L498.3,688.6 L498.6,690.4 L498.8,692.2 L499.1,693.9 L499.4,695.5 L499.7,697.2 L499.9,698.7 L500.2,700.2 L500.5,701.6 L500.8,702.9 L501.0,704.1 L501.3,705.2 L501.6,706.3 L501.9,707.3 L502.1,708.3 L502.4,709.3 L502.7,710.2 L502.9,711.0 L503.2,711.7 L503.5,712.2 L503.8,712.6 L504.0,712.8 L504.3,713.0 L504.6,713.2 L504.9,713.3 L505.1,713.5 L505.4,713.6 L505.7,713.7 L506.0,713.8 L506.2,713.9 L506.5,714.0 L506.8,714.0 L507.1,714.1 L507.3,714.1 L507.6,713.9 L507.9,713.5 L508.2,713.0 L508.4,712.4 L508.7,711.7 L509.0,711.0 L509.2,710.2 L509.5,709.4 L509.8,708.5 L510.1,707.4 L510.3,706.1 L510.6,704.8 L510.9,703.3 L511.2,701.8 L511.4,700.2 L511.7,698.6 L512.0,697.1 L512.3,695.6 L512.5,694.1 L512.8,692.5 L513.1,690.8 L513.4,688.9 L513.6,686.9 L513.9,684.9 L514.2,682.9 L514.5,680.9 L514.7,679.0 L515.0,677.1 L515.3,675.5 L515.5,674.0 L515.8,672.7 L516.1,671.8 L516.4,671.3 L516.6,671.2 L516.9,671.8 L517.2,673.2 L517.5,675.1 L517.7,677.4 L518.0,679.9 L518.3,682.4 L518.6,684.9 L518.8,687.0 L519.1,688.8 L519.4,690.3 L519.7,691.8 L519.9,693.3 L520.2,694.7 L520.5,696.0 L520.7,697.3 L521.0,698.5 L521.3,699.6 L521.6,700.7 L521.8,701.6 L522.1,702.5 L522.4,703.3 L522.7,704.2 L522.9,705.0 L523.2,705.8 L523.5,706.6 L523.8,707.3 L524.0,707.9 L524.3,708.3 L524.6,708.7 L524.9,708.9 L525.1,708.9 L525.4,708.8 L525.7,708.8 L526.0,708.7 L526.2,708.5 L526.5,708.4 L526.8,708.2 L527.0,708.0 L527.3,707.8 L527.6,707.6 L527.9,707.5 L528.1,707.3 L528.4,707.1 L528.7,707.0 L529.0,706.8 L529.2,706.7 L529.5,706.5 L529.8,706.3 L530.1,706.1 L530.3,705.9 L530.6,705.6 L530.9,705.2 L531.2,704.8 L531.4,704.1 L531.7,703.1 L532.0,702.0 L532.3,700.7 L532.5,699.3 L532.8,697.9 L533.1,696.4 L533.3,694.7 L533.6,692.5 L533.9,689.9 L534.2,687.2 L534.4,684.6 L534.7,682.3 L535.0,680.5 L535.3,679.6 L535.5,679.6 L535.8,680.6 L536.1,682.3 L536.4,684.4 L536.6,686.9 L536.9,689.4 L537.2,691.6 L537.5,693.5 L537.7,694.8 L538.0,695.9 L538.3,697.0 L538.6,697.9 L538.8,698.7 L539.1,699.5 L539.4,700.1 L539.6,700.5 L539.9,700.8 L540.2,701.1 L540.5,701.4 L540.7,701.6 L541.0,701.8 L541.3,702.0 L541.6,702.1 L541.8,702.2 L542.1,702.2 L542.4,702.1 L542.7,701.8 L542.9,701.3 L543.2,700.8 L543.5,700.2 L543.8,699.7 L544.0,699.1 L544.3,698.6 L544.6,698.2 L544.9,697.9 L545.1,697.7 L545.4,697.6 L545.7,697.6 L545.9,697.5 L546.2,697.5 L546.5,697.4 L546.8,697.4 L547.0,697.3 L547.3,697.3 L547.6,697.2 L547.9,697.1 L548.1,696.9 L548.4,696.2 L548.7,695.2 L549.0,693.9 L549.2,692.5 L549.5,691.0 L549.8,689.5 L550.1,688.2 L550.3,687.1 L550.6,686.3 L550.9,685.9 L551.1,686.2 L551.4,687.2 L551.7,688.7 L552.0,690.4 L552.2,692.3 L552.5,694.1 L552.8,696.5 L553.1,699.2 L553.3,701.9 L553.6,704.0 L553.9,705.2 L554.2,705.7 L554.4,706.2 L554.7,706.6 L555.0,706.9 L555.3,707.3 L555.5,707.5 L555.8,707.8 L556.1,707.9 L556.4,708.1 L556.6,708.1 L556.9,708.1 L557.2,708.0 L557.4,707.8 L557.7,707.5 L558.0,707.1 L558.3,706.6 L558.5,706.1 L558.8,705.6 L559.1,705.0 L559.4,704.5 L559.6,704.0 L559.9,703.5 L560.2,703.1 L560.5,702.5 L560.7,702.0 L561.0,701.4 L561.3,700.8 L561.6,700.2 L561.8,699.7 L562.1,699.2 L562.4,698.7 L562.7,698.4 L562.9,698.1 L563.2,697.9 L563.5,697.8 L563.7,697.9 L564.0,698.2 L564.3,698.7 L564.6,699.4 L564.8,700.1 L565.1,700.8 L565.4,701.5 L565.7,702.1 L565.9,702.6 L566.2,703.0 L566.5,703.3 L566.8,703.7 L567.0,704.0 L567.3,704.4 L567.6,704.7 L567.9,705.1 L568.1,705.6 L568.4,706.1 L568.7,706.6 L569.0,707.4 L569.2,708.4 L569.5,709.7 L569.8,711.1 L570.0,712.6 L570.3,714.1 L570.6,715.5 L570.9,716.7 L571.1,717.7 L571.4,718.3 L571.7,718.5 L572.0,718.4 L572.2,718.1 L572.5,717.6 L572.8,717.0 L573.1,716.3 L573.3,715.6 L573.6,714.8 L573.9,714.1 L574.2,713.2 L574.4,712.0 L574.7,710.7 L575.0,709.3 L575.3,707.9 L575.5,706.7 L575.8,705.8 L576.1,705.2 L576.3,705.0 L576.6,704.8 L576.9,704.6 L577.2,704.5 L577.4,704.3 L577.7,704.2 L578.0,704.1 L578.3,704.0 L578.5,703.9 L578.8,703.8 L579.1,703.7 L579.4,703.6 L579.6,703.5 L579.9,703.3 L580.2,703.2 L580.5,703.1 L580.7,703.0 L581.0,702.9 L581.3,702.7 L581.5,702.6 L581.8,702.4 L582.1,702.2 L582.4,701.8 L582.6,701.2 L582.9,700.4 L583.2,699.6 L583.5,698.7 L583.7,697.9 L584.0,697.1 L584.3,696.4 L584.6,695.9 L584.8,695.6 L585.1,695.6 L585.4,696.0 L585.7,696.7 L585.9,697.7 L586.2,698.8 L586.5,699.9 L586.8,700.9 L587.0,701.8 L587.3,702.4 L587.6,702.9 L587.8,703.4 L588.1,703.9 L588.4,704.3 L588.7,704.7 L588.9,705.0 L589.2,705.1 L589.5,705.2 L589.8,705.0 L590.0,704.6 L590.3,704.0 L590.6,703.2 L590.9,702.4 L591.1,701.6 L591.4,700.7 L591.7,699.9 L592.0,699.3 L592.2,698.7 L592.5,698.4 L592.8,698.2 L593.1,697.9 L593.3,697.7 L593.6,697.4 L593.9,697.3 L594.1,697.1 L594.4,697.1 L594.7,697.1 L595.0,698.3 L595.2,700.7 L595.5,703.7 L595.8,706.7 L596.1,709.3 L596.3,711.3 L596.6,713.2 L596.9,715.2 L597.2,717.0 L597.4,718.8 L597.7,720.3 L598.0,721.7 L598.3,722.7 L598.5,723.6 L598.8,724.4 L599.1,725.1 L599.4,725.8 L599.6,726.4 L599.9,726.9 L600.2,727.2 L600.4,727.4 L600.7,727.4 L601.0,727.4 L601.3,727.3 L601.5,727.1 L601.8,727.0 L602.1,726.8 L602.4,726.7 L602.6,726.5 L602.9,726.3 L603.2,726.1 L603.5,726.0 L603.7,725.8 L604.0,725.7 L604.3,725.5 L604.6,725.4 L604.8,725.2 L605.1,725.0 L605.4,724.8 L605.7,724.5 L605.9,724.2 L606.2,723.4 L606.5,722.5 L606.7,721.3 L607.0,720.0 L607.3,718.6 L607.6,717.3 L607.8,716.1 L608.1,714.9 L608.4,713.8 L608.7,712.7 L608.9,711.6 L609.2,710.4 L609.5,709.3 L609.8,708.2 L610.0,707.1 L610.3,706.0 L610.6,705.0 L610.9,704.0 L611.1,703.3 L611.4,703.2 L611.7,703.5 L611.9,704.1 L612.2,704.8 L612.5,705.4 L612.8,705.9 L613.0,706.1 L613.3,705.9 L613.6,705.2 L613.9,704.1 L614.1,702.0 L614.4,699.4 L614.7,696.8 L615.0,694.4 L615.2,692.3 L615.5,690.5 L615.8,689.1 L616.1,689.1 L616.3,689.1 L616.6,689.1 L616.9,689.1 L617.2,689.1 L617.4,689.1 L617.7,689.7 L618.0,691.2 L618.2,692.9 L618.5,694.9 L618.8,697.0 L619.1,699.1 L619.3,701.2 L619.6,703.3 L619.9,705.2 L620.2,707.1 L620.4,708.8 L620.7,710.3 L621.0,711.7 L621.3,712.9 L621.5,713.8 L621.8,714.2 L622.1,714.1 L622.4,712.8 L622.6,710.0 L622.9,707.0 L623.2,703.9 L623.5,700.8 L623.7,697.8 L624.0,695.1 L624.3,692.5 L624.5,690.2 L624.8,687.9 L625.1,685.7 L625.4,683.5 L625.6,681.3 L625.9,679.1 L626.2,677.5 L626.5,677.5 L626.7,677.5 L627.0,678.7 L627.3,682.5 L627.6,686.2 L627.8,689.6 L628.1,692.7 L628.4,695.5 L628.7,698.0 L628.9,700.4 L629.2,702.8 L629.5,705.1 L629.8,707.3 L630.0,709.4 L630.3,711.3 L630.6,712.7 L630.8,713.5 L631.1,713.6 L631.4,713.0 L631.7,711.6 L631.9,709.6 L632.2,707.0 L632.5,704.1 L632.8,701.0 L633.0,698.0 L633.3,695.1 L633.6,692.5 L633.9,690.3 L634.1,688.5 L634.4,687.2 L634.7,686.4 L635.0,685.9 L635.2,685.9 L635.5,686.2 L635.8,686.8 L636.1,687.8 L636.3,689.0 L636.6,690.5 L636.9,692.4 L637.1,694.7 L637.4,697.3 L637.7,700.2 L638.0,703.3 L638.2,706.0 L638.5,708.3 L638.8,710.2 L639.1,711.8 L639.3,713.1 L639.6,714.1 L639.9,714.9 L640.2,715.2 L640.4,715.0 L640.7,714.3 L641.0,713.1 L641.3,711.3 L641.5,709.2 L641.8,706.7 L642.1,704.1 L642.3,701.6 L642.6,699.1 L642.9,696.9 L643.2,695.1 L643.4,693.7 L643.7,692.8 L644.0,692.3 L644.3,692.2 L644.5,692.4 L644.8,693.1 L645.1,693.9 L645.4,695.0 L645.6,696.4 L645.9,698.1 L646.2,700.0 L646.5,702.3 L646.7,704.7 L647.0,707.2 L647.3,709.7 L647.6,711.7 L647.8,713.2 L648.1,714.3 L648.4,714.8 L648.6,714.9 L648.9,714.5 L649.2,713.8 L649.5,712.8 L649.7,711.6 L650.0,710.1 L650.3,708.3 L650.6,706.4 L650.8,704.5 L651.1,702.3 L651.4,700.1 L651.7,697.8 L651.9,695.6 L652.2,693.7 L652.5,692.4 L652.8,692.6 L653.0,693.2 L653.3,694.1 L653.6,695.4 L653.9,697.1 L654.1,699.1 L654.4,701.5 L654.7,704.1 L654.9,706.6 L655.2,708.8 L655.5,710.6 L655.8,712.2 L656.0,713.4 L656.3,714.2 L656.6,714.0 L656.9,712.9 L657.1,711.3 L657.4,709.6 L657.7,707.9 L658.0,706.2 L658.2,704.6 L658.5,703.1 L658.8,701.6 L659.1,700.2 L659.3,699.0 L659.6,698.0 L659.9,697.6 L660.2,698.5 L660.4,700.5 L660.7,702.8 L661.0,705.1 L661.2,707.3 L661.5,709.4 L661.8,711.2 L662.1,712.8 L662.3,714.1 L662.6,715.1 L662.9,715.8 L663.2,716.0 L663.4,715.7 L663.7,714.8 L664.0,713.4 L664.3,711.4 L664.5,709.0 L664.8,706.4 L665.1,703.8 L665.4,701.2 L665.6,699.0 L665.9,697.3 L666.2,696.1 L666.5,695.7 L666.7,695.9 L667.0,697.1 L667.3,698.8 L667.5,701.0 L667.8,703.4 L668.1,705.9 L668.4,708.4 L668.6,710.7 L668.9,712.7 L669.2,714.2 L669.5,715.2 L669.7,715.5 L670.0,715.2 L670.3,714.2 L670.6,712.6 L670.8,710.7 L671.1,708.5 L671.4,706.5 L671.7,704.7 L671.9,703.3 L672.2,702.3 L672.5,701.8 L672.7,701.8 L673.0,702.0 L673.3,702.5 L673.6,703.2 L673.8,704.2 L674.1,705.4 L674.4,706.9 L674.7,708.6 L674.9,710.6 L675.2,712.4 L675.5,714.0 L675.8,714.1 L676.0,713.7 L676.3,712.8 L676.6,711.6 L676.9,710.1 L677.1,708.5 L677.4,706.8 L677.7,705.1 L678.0,703.4 L678.2,701.9 L678.5,700.8 L678.8,700.1 L679.0,699.9 L679.3,700.3 L679.6,701.4 L679.9,702.9 L680.1,704.7 L680.4,706.5 L680.7,708.2 L681.0,709.6 L681.2,710.5 L681.5,711.0 L681.8,711.0 L682.1,710.6 L682.3,709.8 L682.6,708.6 L682.9,707.1 L683.2,705.3 L683.4,703.3 L683.7,701.3 L684.0,699.4 L684.3,697.7 L684.5,696.6 L684.8,696.1 L685.1,696.3 L685.3,697.2 L685.6,698.6 L685.9,700.4 L686.2,702.4 L686.4,704.3 L686.7,706.0 L687.0,707.2 L687.3,707.7 L687.5,707.4 L687.8,706.1 L688.1,704.1 L688.4,701.6 L688.6,698.7 L688.9,695.8 L689.2,693.3 L689.5,693.3 L689.7,693.3 L690.0,693.3 L690.3,693.3 L690.6,693.3 L690.8,693.3 L691.1,696.1 L691.4,698.9 L691.6,701.2 L691.9,702.7 L692.2,703.2 L692.5,702.7 L692.7,701.3 L693.0,699.4 L693.3,697.4 L693.6,695.8 L693.8,694.9 L694.1,694.9 L694.4,696.0 L694.7,697.9 L694.9,700.2 L695.2,702.5 L695.5,704.4 L695.8,705.5 L696.0,705.7 L696.3,704.9 L696.6,703.2 L696.9,700.9 L697.1,698.2 L697.4,695.6 L697.7,693.2 L697.9,691.3 L698.2,690.1 L698.5,690.1 L698.8,690.1 L699.0,690.1 L699.3,692.2 L699.6,692.2 L699.9,692.2 L700.1,692.7 L700.4,692.8 L700.7,692.3 L701.0,692.2 L701.2,692.2 L701.5,692.2 L701.8,692.2 L702.1,692.2 L702.3,692.2 L702.6,692.2 L702.9,692.2 L703.1,692.2 L703.4,692.3 L703.7,693.6 L704.0,694.1 L704.2,693.9 L704.5,693.2 L704.8,692.4 L705.1,692.2 L705.3,692.2 L705.6,693.0 L705.9,694.6 L706.2,696.8 L706.4,699.3 L706.7,701.6 L707.0,703.3 L707.3,704.1 L707.5,703.7 L707.8,702.2 L708.1,699.9 L708.4,697.5 L708.6,695.5 L708.9,694.5 L709.2,694.6 L709.4,695.9 L709.7,697.9 L710.0,700.1 L710.3,701.9 L710.5,703.0 L710.8,702.9 L711.1,701.9 L711.4,700.0 L711.6,697.7 L711.9,695.6 L712.2,694.1 L712.5,693.8 L712.7,694.6 L713.0,696.4 L713.3,698.8 L713.6,701.0 L713.8,702.4 L714.1,702.7 L714.4,701.8 L714.7,700.1 L714.9,698.0 L715.2,696.3 L715.5,695.4 L715.7,695.5 L716.0,696.5 L716.3,698.2 L716.6,700.0 L716.8,701.5 L717.1,702.1 L717.4,701.8 L717.7,700.4 L717.9,698.5 L718.2,696.5 L718.5,695.1 L718.8,694.6 L719.0,695.2 L719.3,696.7 L719.6,698.6 L719.9,700.1 L720.1,701.0 L720.4,700.9 L720.7,699.9 L721.0,698.5 L721.2,697.2 L721.5,696.4 L721.8,696.3 L722.0,696.9 L722.3,697.7 L722.6,698.6 L722.9,699.3 L723.1,699.5 L723.4,699.4 L723.7,699.0 L724.0,698.4 L724.2,697.7 L724.5,697.2 L724.8,697.3 L725.1,697.9 L725.3,699.2 L725.6,700.8 L725.9,702.1 L726.2,702.7 L726.4,702.5 L726.7,701.5 L727.0,700.2 L727.3,699.2 L727.5,698.7 L727.8,699.0 L728.1,700.0 L728.3,701.4 L728.6,702.7 L728.9,703.5 L729.2,703.6 L729.4,702.9 L729.7,701.5 L730.0,699.9 L730.3,698.5 L730.5,697.8 L730.8,698.2 L731.1,699.5 L731.4,701.3 L731.6,702.5 L731.9,702.6 L732.2,701.5 L732.5,699.8 L732.7,698.0 L733.0,696.7 L733.3,696.2 L733.6,696.5 L733.8,697.4 L734.1,698.7 L734.4,699.9 L734.6,700.8 L734.9,701.0 L735.2,700.8 L735.5,700.4 L735.7,699.9 L736.0,700.0 L736.3,700.7 L736.6,702.3 L736.8,704.2 L737.1,706.1 L737.4,707.4 L737.7,707.8 L737.9,707.3 L738.2,706.3 L738.5,705.5 L738.8,705.2 L739.0,705.7 L739.3,707.0 L739.6,708.6 L739.8,710.2 L740.1,711.3 L740.4,711.8 L740.7,711.8 L740.9,711.4 L741.2,711.0 L741.5,710.9 L741.8,711.4 L742.0,712.4 L742.3,713.3 L742.6,714.2 L742.9,714.6 L743.1,714.4 L743.4,713.6 L743.7,712.4 L744.0,711.2 L744.2,710.5 L744.5,710.5 L744.8,711.4 L745.1,712.8 L745.3,714.2 L745.6,715.1 L745.9,714.6 L746.1,713.3 L746.4,712.0 L746.7,711.2 L747.0,711.0 L747.2,711.4 L747.5,712.0 L747.8,712.5 L748.1,712.6 L748.3,711.9 L748.6,710.7 L748.9,709.3 L749.2,707.7 L749.4,706.3 L749.7,705.4 L750.0,705.1 L750.3,705.3 L750.5,705.7 L750.8,705.7 L751.1,704.8 L751.4,703.1 L751.6,700.7 L751.9,698.4" fill="none" stroke="#8fc4e6" stroke-width="0.8" stroke-linejoin="round"/>
<path d="M751.9,698.4 L752.2,697.0 L752.4,696.8 L752.7,697.2 L753.0,697.6 L753.3,698.0 L753.5,697.7 L753.8,696.8 L754.1,695.8 L754.4,695.0 L754.6,694.7 L754.9,695.1 L755.2,695.8 L755.5,696.9 L755.7,697.8 L756.0,698.4 L756.3,698.5 L756.6,698.1 L756.8,697.8 L757.1,697.7 L757.4,698.3 L757.7,699.3 L757.9,700.5 L758.2,701.4 L758.5,701.7 L758.7,701.3 L759.0,700.6 L759.3,699.8 L759.6,699.4 L759.8,699.6 L760.1,700.5 L760.4,701.7 L760.7,702.6 L760.9,702.8 L761.2,702.2 L761.5,700.9 L761.8,699.7 L762.0,699.3 L762.3,700.2 L762.6,701.9 L762.9,703.7 L763.1,704.5 L763.4,703.9 L763.7,702.1 L764.0,700.1 L764.2,698.7 L764.5,698.7 L764.8,699.9 L765.0,701.6 L765.3,702.6 L765.6,702.4 L765.9,701.0 L766.1,699.3 L766.4,698.1 L766.7,698.0 L767.0,698.9 L767.2,700.3 L767.5,701.3 L767.8,701.7 L768.1,701.2 L768.3,700.4 L768.6,699.5 L768.9,699.3 L769.2,699.9 L769.4,701.4 L769.7,703.1 L770.0,704.0 L770.2,703.2 L770.5,701.5 L770.8,700.1 L771.1,699.9 L771.3,700.5 L771.6,701.6 L771.9,702.3 L772.2,702.4 L772.4,701.7 L772.7,700.5 L773.0,699.3 L773.3,698.8 L773.5,699.2 L773.8,700.3 L774.1,701.3 L774.4,701.5 L774.6,700.4 L774.9,698.5 L775.2,696.9 L775.5,696.7 L775.7,698.1 L776.0,700.0 L776.3,700.9 L776.5,700.4 L776.8,698.7 L777.1,697.1 L777.4,696.4 L777.6,697.0 L777.9,698.4 L778.2,699.8 L778.5,700.3 L778.7,699.5 L779.0,698.1 L779.3,697.0 L779.6,697.2 L779.8,699.0 L780.1,701.3 L780.4,702.6 L780.7,702.3 L780.9,700.7 L781.2,699.3 L781.5,699.4 L781.8,701.2 L782.0,703.5 L782.3,704.7 L782.6,704.2 L782.8,702.5 L783.1,700.9 L783.4,700.9 L783.7,702.6 L783.9,704.6 L784.2,705.0 L784.5,703.6 L784.8,701.5 L785.0,700.5 L785.3,701.3 L785.6,703.0 L785.9,704.0 L786.1,703.2 L786.4,700.8 L786.7,699.3 L787.0,700.4 L787.2,702.0 L787.5,701.4 L787.8,700.6 L788.1,701.1 L788.3,700.9 L788.6,698.4 L788.9,698.5 L789.1,701.3 L789.4,701.3 L789.7,697.7 L790.0,697.2 L790.2,701.2 L790.5,700.4 L790.8,697.1 L791.1,696.2 L791.3,700.7 L791.6,700.2 L791.9,696.0 L792.2,696.4 L792.4,699.6 L792.7,700.2 L793.0,696.5 L793.3,696.5 L793.5,701.7 L793.8,700.7 L794.1,697.2 L794.4,696.8 L794.6,700.7 L794.9,701.0 L795.2,697.5 L795.4,698.1 L795.7,701.7 L796.0,702.1 L796.3,698.9 L796.5,698.5 L796.8,702.1 L797.1,703.5 L797.4,699.6 L797.6,699.4 L797.9,703.7 L798.2,703.9 L798.5,699.5 L798.7,700.0 L799.0,703.1 L799.3,702.9 L799.6,699.3 L799.8,699.8 L800.1,702.6 L800.4,703.2 L800.6,698.8 L800.9,699.2 L801.2,703.2 L801.5,701.5 L801.7,698.1 L802.0,698.0 L802.3,701.8 L802.6,701.9 L802.8,697.6 L803.1,695.2 L803.4,700.9 L803.7,700.7 L803.9,695.7 L804.2,696.4 L804.5,699.3 L804.8,699.4 L805.0,695.1 L805.3,695.3 L805.6,699.7 L805.9,699.7 L806.1,695.9 L806.4,695.9 L806.7,699.7 L806.9,699.8 L807.2,695.8 L807.5,696.8 L807.8,700.2 L808.0,700.6 L808.3,695.8 L808.6,697.6 L808.9,701.0 L809.1,701.6 L809.4,697.8 L809.7,698.5 L810.0,701.7 L810.2,701.8 L810.5,698.8 L810.8,698.7 L811.1,702.4 L811.3,702.5 L811.6,699.1 L811.9,699.7 L812.2,703.5 L812.4,702.7 L812.7,698.6 L813.0,699.8 L813.2,702.6 L813.5,703.7 L813.8,699.6 L814.1,699.3 L814.3,702.1 L814.6,702.1 L814.9,698.5 L815.2,698.4 L815.4,702.3 L815.7,702.2 L816.0,697.2 L816.3,697.3 L816.5,701.0 L816.8,701.0 L817.1,696.7 L817.4,695.4 L817.6,700.3 L817.9,699.7 L818.2,695.4 L818.5,696.3 L818.7,699.1 L819.0,700.5 L819.3,695.1 L819.5,696.0 L819.8,700.4 L820.1,699.3 L820.4,695.4 L820.6,695.6 L820.9,699.3 L821.2,699.4 L821.5,695.5 L821.7,696.5 L822.0,699.8 L822.3,700.7 L822.6,696.3 L822.8,697.5 L823.1,700.6 L823.4,700.9 L823.7,697.1 L823.9,698.2 L824.2,702.1 L824.5,703.1 L824.8,698.2 L825.0,698.6 L825.3,702.6 L825.6,703.1 L825.8,698.8 L826.1,699.0 L826.4,702.8 L826.7,703.0 L826.9,698.9 L827.2,699.4 L827.5,703.5 L827.8,703.4 L828.0,699.1 L828.3,698.3 L828.6,702.0 L828.9,701.9 L829.1,698.0 L829.4,698.0 L829.7,701.3 L830.0,701.1 L830.2,697.7 L830.5,696.8 L830.8,700.8 L831.0,700.5 L831.3,696.6 L831.6,695.6 L831.9,699.9 L832.1,699.2 L832.4,696.1 L832.7,695.5 L833.0,698.7 L833.2,700.3 L833.5,695.3 L833.8,695.7 L834.1,700.2 L834.3,699.2 L834.6,694.6 L834.9,695.3 L835.2,699.1 L835.4,699.9 L835.7,696.1 L836.0,696.3 L836.3,700.2 L836.5,700.7 L836.8,696.9 L837.1,697.6 L837.3,702.0 L837.6,701.8 L837.9,696.8 L838.2,697.6 L838.4,702.0 L838.7,701.8 L839.0,698.8 L839.3,698.4 L839.5,702.2 L839.8,702.7 L840.1,698.4 L840.4,699.1 L840.6,703.8 L840.9,703.1 L841.2,699.3 L841.5,699.0 L841.7,702.2 L842.0,702.4 L842.3,698.2 L842.6,697.7 L842.8,702.0 L843.1,702.0 L843.4,697.8 L843.6,697.7 L843.9,701.3 L844.2,701.5 L844.5,696.4 L844.7,695.0 L845.0,700.6 L845.3,700.0 L845.6,695.7 L845.8,696.0 L846.1,699.6 L846.4,701.9 L846.7,696.2 L846.9,695.1 L847.2,699.9 L847.5,699.3 L847.8,696.1 L848.0,696.7 L848.3,702.5 L848.6,700.2 L848.9,697.4 L849.1,696.1 L849.4,701.5 L849.7,703.2 L849.9,698.1 L850.2,698.6 L850.5,704.1 L850.8,704.1 L851.0,699.6 L851.3,699.8 L851.6,703.7 L851.9,704.1 L852.1,702.9 L852.4,702.8 L852.7,706.9 L853.0,708.1 L853.2,706.1 L853.5,706.2 L853.8,707.9 L854.1,706.7 L854.3,704.7 L854.6,703.6 L854.9,705.0 L855.2,705.5 L855.4,705.8 L855.7,707.2 L856.0,709.9 L856.2,711.0 L856.5,711.0 L856.8,711.4 L857.1,712.0 L857.3,710.9 L857.6,708.8 L857.9,707.0 L858.2,706.8 L858.4,706.0 L858.7,704.9 L859.0,705.4 L859.3,707.0 L859.5,708.4 L859.8,708.9 L860.1,710.3 L860.4,711.7 L860.6,712.3 L860.9,710.5 L861.2,709.6 L861.4,709.0 L861.7,707.8 L862.0,705.4 L862.3,705.0 L862.5,706.0 L862.8,706.3 L863.1,706.5 L863.4,707.9 L863.6,710.1 L863.9,711.3 L864.2,711.2 L864.5,710.8 L864.7,711.5 L865.0,710.4 L865.3,708.2 L865.6,706.9 L865.8,707.1 L866.1,706.5 L866.4,706.2 L866.7,707.2 L866.9,709.1 L867.2,710.7 L867.5,711.2 L867.7,712.0 L868.0,713.2 L868.3,712.9 L868.6,711.2 L868.8,709.9 L869.1,709.7 L869.4,708.4 L869.7,707.1 L869.9,707.2 L870.2,708.9 L870.5,709.7 L870.8,710.3 L871.0,711.9 L871.3,713.7 L871.6,714.1 L871.9,713.1 L872.1,712.6 L872.4,712.2 L872.7,711.2 L873.0,709.8 L873.2,709.1 L873.5,710.0 L873.8,710.7 L874.0,711.2 L874.3,712.8 L874.6,715.1 L874.9,716.5 L875.1,716.5 L875.4,716.8 L875.7,717.2 L876.0,716.4 L876.2,714.7 L876.5,713.8 L876.8,714.0 L877.1,714.3 L877.3,714.0 L877.6,715.1 L877.9,717.3 L878.2,719.0 L878.4,719.6 L878.7,720.5 L879.0,721.4 L879.3,721.1 L879.5,719.5 L879.8,718.7 L880.1,718.3 L880.3,717.3 L880.6,716.2 L880.9,716.6 L881.2,717.8 L881.4,718.9 L881.7,719.3 L882.0,720.0 L882.3,721.0 L882.5,720.6 L882.8,719.1 L883.1,717.6 L883.4,717.0 L883.6,715.8 L883.9,714.2 L884.2,714.0 L884.5,715.1 L884.7,715.9 L885.0,716.3 L885.3,717.2 L885.6,718.5 L885.8,718.6 L886.1,717.3 L886.4,716.3 L886.6,715.6 L886.9,714.3 L887.2,712.6 L887.5,712.0 L887.7,712.6 L888.0,713.2 L888.3,713.4 L888.6,714.4 L888.8,715.7 L889.1,716.0 L889.4,715.1 L889.7,713.8 L889.9,711.5 L890.2,707.3 L890.5,701.8 L890.8,699.1 L891.0,700.7 L891.3,704.6 L891.6,708.4 L891.8,711.6 L892.1,714.1 L892.4,714.9 L892.7,714.6 L892.9,714.1 L893.2,713.7 L893.5,712.6 L893.8,711.1 L894.0,710.2 L894.3,710.6 L894.6,711.0 L894.9,711.1 L895.1,712.1 L895.4,713.6 L895.7,714.1 L896.0,713.7 L896.2,713.4 L896.5,713.2 L896.8,712.0 L897.1,710.6 L897.3,710.0 L897.6,710.2 L897.9,710.5 L898.1,710.7 L898.4,711.4 L898.7,712.8 L899.0,713.3 L899.2,712.9 L899.5,712.5 L899.8,712.1 L900.1,711.2 L900.3,709.8 L900.6,709.2 L900.9,709.7 L901.2,710.1 L901.4,710.4 L901.7,711.3 L902.0,712.3 L902.3,712.6 L902.5,712.0 L902.8,711.6 L903.1,711.1 L903.4,710.2 L903.6,709.1 L903.9,708.7 L904.2,709.3 L904.4,709.9 L904.7,710.3 L905.0,711.2 L905.3,712.1 L905.5,712.3 L905.8,711.2 L906.1,710.5 L906.4,710.2 L906.6,709.4 L906.9,708.4 L907.2,708.6 L907.5,709.4 L907.7,710.2 L908.0,710.6 L908.3,711.2 L908.6,711.8 L908.8,711.5 L909.1,710.2 L909.4,709.4 L909.7,709.0 L909.9,708.6 L910.2,708.2 L910.5,708.7 L910.7,709.9 L911.0,710.6 L911.3,710.8 L911.6,710.9 L911.8,711.1 L912.1,710.2 L912.4,709.0 L912.7,708.2 L912.9,708.2 L913.2,708.2 L913.5,708.5 L913.8,709.2 L914.0,710.4 L914.3,710.9 L914.6,710.4 L914.9,709.9 L915.1,709.5 L915.4,708.7 L915.7,707.7 L916.0,707.5 L916.2,708.3 L916.5,708.9 L916.8,709.4 L917.0,710.1 L917.3,710.8 L917.6,710.7 L917.9,709.6 L918.1,708.7 L918.4,708.5 L918.7,708.1 L919.0,707.9 L919.2,708.3 L919.5,709.6 L919.8,710.4 L920.1,710.6 L920.3,710.5 L920.6,710.3 L920.9,709.7 L921.2,708.5 L921.4,707.9 L921.7,708.4 L922.0,709.1 L922.2,709.4 L922.5,710.2 L922.8,711.1 L923.1,711.0 L923.3,710.2 L923.6,709.5 L923.9,709.2 L924.2,708.6 L924.4,708.3 L924.7,708.9 L925.0,709.9 L925.3,710.7 L925.5,710.9 L925.8,710.7 L926.1,710.6 L926.4,709.9 L926.6,708.8 L926.9,708.5 L927.2,708.9 L927.5,709.5 L927.7,710.1 L928.0,711.2 L928.3,712.2 L928.5,712.3 L928.8,711.5 L929.1,710.7 L929.4,710.7 L929.6,710.7 L929.9,711.0 L930.2,712.0 L930.5,713.9 L930.7,714.8 L931.0,714.8 L931.3,714.4 L931.6,714.2 L931.8,713.5 L932.1,712.6 L932.4,713.0 L932.7,714.7 L932.9,715.9 L933.2,716.7 L933.5,717.5 L933.8,718.0 L934.0,717.3 L934.3,715.7 L934.6,715.1 L934.8,715.9 L935.1,716.8 L935.4,717.0 L935.7,717.5 L935.9,720.7 L936.2,721.4 L936.5,718.3 L936.8,717.5 L937.0,719.6 L937.3,719.4 L937.6,712.7 L937.9,709.3 L938.1,722.6 L938.4,722.3 L938.7,718.7 L939.0,716.8 L939.2,722.7 L939.5,723.9 L939.8,708.8 L940.1,709.0 L940.3,724.3 L940.6,724.3 L940.9,712.7 L941.1,700.6 L941.4,725.3 L941.7,725.7 L942.0,718.8 L942.2,720.7 L942.5,725.4 L942.8,726.0 L943.1,716.4 L943.3,702.2 L943.6,726.3 L943.9,726.8 L944.2,703.4 L944.4,718.8 L944.7,727.3 L945.0,726.6 L945.3,707.6 L945.5,721.8 L945.8,727.5 L946.1,728.0 L946.4,721.8 L946.6,711.4 L946.9,728.4 L947.2,729.0 L947.4,711.7 L947.7,724.0 L948.0,728.2 L948.3,729.1 L948.5,719.4 L948.8,692.2 L949.1,730.2 L949.4,730.1 L949.6,711.1 L949.9,716.2 L950.2,731.3 L950.5,730.8 L950.7,722.8 L951.0,715.0 L951.3,730.9 L951.6,731.4 L951.8,711.7 L952.1,718.5 L952.4,731.3 L952.6,732.0 L952.9,724.4 L953.2,721.9 L953.5,732.0 L953.7,733.0 L954.0,722.9 L954.3,722.3 L954.6,732.9 L954.8,733.9 L955.1,704.9 L955.4,723.4 L955.7,734.2 L955.9,733.9 L956.2,729.2 L956.5,726.6 L956.8,735.0 L957.0,735.4 L957.3,723.6 L957.6,725.5 L957.9,735.8 L958.1,735.5 L958.4,729.8 L958.7,730.4 L958.9,736.6 L959.2,736.8 L959.5,734.0 L959.8,734.8 L960.0,738.7 L960.3,737.8 L960.6,736.1 L960.9,735.7 L961.1,738.9 L961.4,738.8 L961.7,737.2 L962.0,737.0 L962.2,739.7 L962.5,740.7 L962.8,738.2 L963.1,737.7 L963.3,741.0 L963.6,741.9 L963.9,739.5 L964.2,739.7 L964.4,742.2 L964.7,742.4" fill="none" stroke="#7dbbe0" stroke-width="1.05" stroke-linejoin="round"/>
<path d="M472.0,705.2 L472.3,704.4 L472.5,703.5 L472.8,702.7 L473.1,701.9 L473.4,701.1 L473.6,700.3 L473.9,699.5 L474.2,698.7 L474.5,698.0 L474.7,697.2 L475.0,696.4 L475.3,695.6 L475.6,694.9 L475.8,694.1 L476.1,693.3 L476.4,692.5 L476.7,691.6 L476.9,690.6 L477.2,689.7 L477.5,688.8 L477.8,688.1 L478.0,687.6 L478.3,687.4 L478.6,687.5 L478.8,687.8 L479.1,688.4 L479.4,689.0 L479.7,689.8 L479.9,690.7 L480.2,691.6 L480.5,692.5 L480.8,693.4 L481.0,694.2 L481.3,694.8 L481.6,695.5 L481.9,696.1 L482.1,696.8 L482.4,697.4 L482.7,698.1 L483.0,698.7 L483.2,699.3 L483.5,699.8 L483.8,700.2 L484.1,700.5 L484.3,700.8 L484.6,701.0 L484.9,701.2 L485.1,701.4 L485.4,701.6 L485.7,701.8 L486.0,701.9 L486.2,702.0 L486.5,702.1 L486.8,702.2 L487.1,702.2 L487.3,702.2 L487.6,701.5 L487.9,700.2 L488.2,698.5 L488.4,696.5 L488.7,694.4 L489.0,692.2 L489.3,690.1 L489.5,688.3 L489.8,686.3 L490.1,684.1 L490.3,681.7 L490.6,679.2 L490.9,676.6 L491.2,674.1 L491.4,671.7 L491.7,669.6 L492.0,667.7 L492.3,666.2 L492.5,665.3 L492.8,664.9 L493.1,665.1 L493.4,666.0 L493.6,667.4 L493.9,669.2 L494.2,671.3 L494.5,673.6 L494.7,676.0 L495.0,678.3 L495.3,680.5 L495.6,682.6 L495.8,684.9 L496.1,687.4 L496.4,690.0 L496.6,692.7 L496.9,695.5 L497.2,698.2 L497.5,700.8 L497.7,703.3 L498.0,705.7 L498.3,707.8 L498.6,709.8 L498.8,711.9 L499.1,713.9 L499.4,715.9 L499.7,717.8 L499.9,719.6 L500.2,721.3 L500.5,722.8 L500.8,724.1 L501.0,725.2 L501.3,725.9 L501.6,726.6 L501.9,727.1 L502.1,727.7 L502.4,728.1 L502.7,728.6 L502.9,729.0 L503.2,729.3 L503.5,729.6 L503.8,729.9 L504.0,730.2 L504.3,730.4 L504.6,730.7 L504.9,730.9 L505.1,731.1 L505.4,731.4 L505.7,731.6 L506.0,731.8 L506.2,732.0 L506.5,732.1 L506.8,732.3 L507.1,732.4 L507.3,732.5 L507.6,732.6 L507.9,732.6 L508.2,732.5 L508.4,732.0 L508.7,731.3 L509.0,730.2 L509.2,729.0 L509.5,727.7 L509.8,726.3 L510.1,725.0 L510.3,723.7 L510.6,722.2 L510.9,720.5 L511.2,718.7 L511.4,716.7 L511.7,714.8 L512.0,712.8 L512.3,710.8 L512.5,708.9 L512.8,707.2 L513.1,705.6 L513.4,704.1 L513.6,702.5 L513.9,700.8 L514.2,699.2 L514.5,697.5 L514.7,696.0 L515.0,694.5 L515.3,693.2 L515.5,692.1 L515.8,691.2 L516.1,690.5 L516.4,690.2 L516.6,690.1 L516.9,690.8 L517.2,692.0 L517.5,693.8 L517.7,695.9 L518.0,698.2 L518.3,700.7 L518.6,703.0 L518.8,705.1 L519.1,706.9 L519.4,708.6 L519.7,710.3 L519.9,712.0 L520.2,713.7 L520.5,715.4 L520.7,717.0 L521.0,718.5 L521.3,719.9 L521.6,721.2 L521.8,722.3 L522.1,723.2 L522.4,724.1 L522.7,725.0 L522.9,725.8 L523.2,726.7 L523.5,727.4 L523.8,728.1 L524.0,728.6 L524.3,729.1 L524.6,729.4 L524.9,729.6 L525.1,729.6 L525.4,729.4 L525.7,729.1 L526.0,728.8 L526.2,728.3 L526.5,728.0 L526.8,727.6 L527.0,727.4 L527.3,727.4 L527.6,727.5 L527.9,727.6 L528.1,727.7 L528.4,727.9 L528.7,728.1 L529.0,728.3 L529.2,728.5 L529.5,728.7 L529.8,728.8 L530.1,728.9 L530.3,728.8 L530.6,728.5 L530.9,728.0 L531.2,727.2 L531.4,726.2 L531.7,725.0 L532.0,723.6 L532.3,722.2 L532.5,720.7 L532.8,719.1 L533.1,717.5 L533.3,715.6 L533.6,712.7 L533.9,709.1 L534.2,705.2 L534.4,701.5 L534.7,698.1 L535.0,695.6 L535.3,694.4 L535.5,694.4 L535.8,695.3 L536.1,696.9 L536.4,698.9 L536.6,701.1 L536.9,703.4 L537.2,705.6 L537.5,707.4 L537.7,708.9 L538.0,710.3 L538.3,711.8 L538.6,713.2 L538.8,714.5 L539.1,715.6 L539.4,716.5 L539.6,717.0 L539.9,717.0 L540.2,716.7 L540.5,716.1 L540.7,715.4 L541.0,714.5 L541.3,713.8 L541.6,713.1 L541.8,712.7 L542.1,712.6 L542.4,712.9 L542.7,713.4 L542.9,714.2 L543.2,715.0 L543.5,715.8 L543.8,716.5 L544.0,716.9 L544.3,717.0 L544.6,716.9 L544.9,716.5 L545.1,716.0 L545.4,715.5 L545.7,715.0 L545.9,714.5 L546.2,714.2 L546.5,714.1 L546.8,714.1 L547.0,714.3 L547.3,714.5 L547.6,714.8 L547.9,715.1 L548.1,715.3 L548.4,715.5 L548.7,715.6 L549.0,715.3 L549.2,714.7 L549.5,713.8 L549.8,712.7 L550.1,711.6 L550.3,710.7 L550.6,710.0 L550.9,709.6 L551.1,709.8 L551.4,710.3 L551.7,711.2 L552.0,712.2 L552.2,713.4 L552.5,714.6 L552.8,715.8 L553.1,716.8 L553.3,717.6 L553.6,718.5 L553.9,719.3 L554.2,720.1 L554.4,720.9 L554.7,721.6 L555.0,722.3 L555.3,722.8 L555.5,723.2 L555.8,723.6 L556.1,724.0 L556.4,724.4 L556.6,724.7 L556.9,725.0 L557.2,725.3 L557.4,725.6 L557.7,725.7 L558.0,725.9 L558.3,725.9 L558.5,725.9 L558.8,725.6 L559.1,725.1 L559.4,724.5 L559.6,723.8 L559.9,723.0 L560.2,722.1 L560.5,721.2 L560.7,720.3 L561.0,719.4 L561.3,718.6 L561.6,717.7 L561.8,716.6 L562.1,715.3 L562.4,714.1 L562.7,713.0 L562.9,712.1 L563.2,711.4 L563.5,711.1 L563.7,711.2 L564.0,711.6 L564.3,712.3 L564.6,713.1 L564.8,714.0 L565.1,715.0 L565.4,715.9 L565.7,716.8 L565.9,717.6 L566.2,718.3 L566.5,719.1 L566.8,719.9 L567.0,720.6 L567.3,721.4 L567.6,722.2 L567.9,723.1 L568.1,723.9 L568.4,724.9 L568.7,725.8 L569.0,727.0 L569.2,728.4 L569.5,730.0 L569.8,731.7 L570.0,733.5 L570.3,735.2 L570.6,736.7 L570.9,738.1 L571.1,739.1 L571.4,739.8 L571.7,740.0 L572.0,739.8 L572.2,739.5 L572.5,738.9 L572.8,738.1 L573.1,737.3 L573.3,736.3 L573.6,735.4 L573.9,734.3 L574.2,733.4 L574.4,732.5 L574.7,731.6 L575.0,730.8 L575.3,730.0 L575.5,729.1 L575.8,728.2 L576.1,727.4 L576.3,726.5 L576.6,725.6 L576.9,724.8 L577.2,724.1 L577.4,723.3 L577.7,722.7 L578.0,722.0 L578.3,721.2 L578.5,720.5 L578.8,719.8 L579.1,719.1 L579.4,718.5 L579.6,717.9 L579.9,717.5 L580.2,717.2 L580.5,717.0 L580.7,717.1 L581.0,717.4 L581.3,717.8 L581.5,718.4 L581.8,719.1 L582.1,719.8 L582.4,720.5 L582.6,721.1 L582.9,721.7 L583.2,722.0 L583.5,722.2 L583.7,722.0 L584.0,721.2 L584.3,720.0 L584.6,718.5 L584.8,717.0 L585.1,715.7 L585.4,714.6 L585.7,714.1 L585.9,714.5 L586.2,716.2 L586.5,718.9 L586.8,722.1 L587.0,725.5 L587.3,728.6 L587.6,731.1 L587.8,732.5 L588.1,732.5 L588.4,732.0 L588.7,731.1 L588.9,729.9 L589.2,728.5 L589.5,727.0 L589.8,725.4 L590.0,723.8 L590.3,722.2 L590.6,720.1 L590.9,717.6 L591.1,714.9 L591.4,712.2 L591.7,709.9 L592.0,708.0 L592.2,706.9 L592.5,706.7 L592.8,707.2 L593.1,708.1 L593.3,709.3 L593.6,710.8 L593.9,712.4 L594.1,714.2 L594.4,715.8 L594.7,717.4 L595.0,719.1 L595.2,720.9 L595.5,722.8 L595.8,724.8 L596.1,726.8 L596.3,728.7 L596.6,730.5 L596.9,732.0 L597.2,733.5 L597.4,735.0 L597.7,736.4 L598.0,737.8 L598.3,739.1 L598.5,740.2 L598.8,741.3 L599.1,742.2 L599.4,743.1 L599.6,744.0 L599.9,744.9 L600.2,745.6 L600.4,746.3 L600.7,746.9 L601.0,747.3 L601.3,747.4 L601.5,747.2 L601.8,746.5 L602.1,745.4 L602.4,744.1 L602.6,742.6 L602.9,741.1 L603.2,739.6 L603.5,738.3 L603.7,737.2 L604.0,736.5 L604.3,736.3 L604.6,736.9 L604.8,738.3 L605.1,740.2 L605.4,742.5 L605.7,744.7 L605.9,746.7 L606.2,748.2 L606.5,748.9 L606.7,749.1 L607.0,749.2 L607.3,749.4 L607.6,749.5 L607.8,749.6 L608.1,749.6 L608.4,749.6 L608.7,749.2 L608.9,747.8 L609.2,745.8 L609.5,743.2 L609.8,740.3 L610.0,737.3 L610.3,734.3 L610.6,731.6 L610.9,729.4 L611.1,727.9 L611.4,727.2 L611.7,726.9 L611.9,726.8 L612.2,726.7 L612.5,726.3 L612.8,725.7 L613.0,724.8 L613.3,723.5 L613.6,721.8 L613.9,719.8 L614.1,717.1 L614.4,713.8 L614.7,710.3 L615.0,706.6 L615.2,702.9 L615.5,699.1 L615.8,695.4 L616.1,695.4 L616.3,695.4 L616.6,695.4 L616.9,695.4 L617.2,695.4 L617.4,696.6 L617.7,698.9 L618.0,701.4 L618.2,704.0 L618.5,706.5 L618.8,709.2 L619.1,711.9 L619.3,714.8 L619.6,717.8 L619.9,721.2 L620.2,724.7 L620.4,728.4 L620.7,732.2 L621.0,733.1 L621.3,732.0 L621.5,730.0 L621.8,727.4 L622.1,724.5 L622.4,721.6 L622.6,718.8 L622.9,716.3 L623.2,714.0 L623.5,711.8 L623.7,709.6 L624.0,707.2 L624.3,704.5 L624.5,701.3 L624.8,697.8 L625.1,694.1 L625.4,690.3 L625.6,686.7 L625.9,683.6 L626.2,681.7 L626.5,681.7 L626.7,681.7 L627.0,683.3 L627.3,687.4 L627.6,692.0 L627.8,696.8 L628.1,701.6 L628.4,706.5 L628.7,711.2 L628.9,715.8 L629.2,720.2 L629.5,724.2 L629.8,727.7 L630.0,730.5 L630.3,732.5 L630.6,733.5 L630.8,733.4 L631.1,732.4 L631.4,730.4 L631.7,727.6 L631.9,724.2 L632.2,720.5 L632.5,716.7 L632.8,712.8 L633.0,709.1 L633.3,705.4 L633.6,702.0 L633.9,698.8 L634.1,695.9 L634.4,693.4 L634.7,691.4 L635.0,690.2 L635.2,690.1 L635.5,690.1 L635.8,691.0 L636.1,692.9 L636.3,695.3 L636.6,698.3 L636.9,701.8 L637.1,705.5 L637.4,709.4 L637.7,713.3 L638.0,717.1 L638.2,720.6 L638.5,723.6 L638.8,726.0 L639.1,727.6 L639.3,728.6 L639.6,728.9 L639.9,728.7 L640.2,728.1 L640.4,727.2 L640.7,726.2 L641.0,725.0 L641.3,723.8 L641.5,722.3 L641.8,720.6 L642.1,718.5 L642.3,715.9 L642.6,712.9 L642.9,709.6 L643.2,706.2 L643.4,702.8 L643.7,699.9 L644.0,697.5 L644.3,697.5 L644.5,697.5 L644.8,697.5 L645.1,697.5 L645.4,698.8 L645.6,702.5 L645.9,706.6 L646.2,710.9 L646.5,715.3 L646.7,719.5 L647.0,723.5 L647.3,727.0 L647.6,730.1 L647.8,732.7 L648.1,735.0 L648.4,736.8 L648.6,738.2 L648.9,739.1 L649.2,739.4 L649.5,738.9 L649.7,737.4 L650.0,730.5 L650.3,726.1 L650.6,722.0 L650.8,718.2 L651.1,714.9 L651.4,712.2 L651.7,710.0 L651.9,708.3 L652.2,707.3 L652.5,707.0 L652.8,707.3 L653.0,708.4 L653.3,710.1 L653.6,712.3 L653.9,714.9 L654.1,717.6 L654.4,720.2 L654.7,722.5 L654.9,724.5 L655.2,726.1 L655.5,727.5 L655.8,728.7 L656.0,729.9 L656.3,731.1 L656.6,732.1 L656.9,732.8 L657.1,732.7 L657.4,731.6 L657.7,729.3 L658.0,725.7 L658.2,721.0 L658.5,716.6 L658.8,713.4 L659.1,711.2 L659.3,709.8 L659.6,709.2 L659.9,709.4 L660.2,710.2 L660.4,711.6 L660.7,713.6 L661.0,715.9 L661.2,718.5 L661.5,721.2 L661.8,723.9 L662.1,726.4 L662.3,728.7 L662.6,730.7 L662.9,732.2 L663.2,733.2 L663.4,733.6 L663.7,733.1 L664.0,731.7 L664.3,729.3 L664.5,725.9 L664.8,721.7 L665.1,716.9 L665.4,712.7 L665.6,709.8 L665.9,707.9 L666.2,707.1 L666.5,707.4 L666.7,708.5 L667.0,710.5 L667.3,713.3 L667.5,716.8 L667.8,720.8 L668.1,725.1 L668.4,729.6 L668.6,733.9 L668.9,737.8 L669.2,740.9 L669.5,743.1 L669.7,742.7 L670.0,740.8 L670.3,737.9 L670.6,734.1 L670.8,729.9 L671.1,725.6 L671.4,721.3 L671.7,717.4 L671.9,713.8 L672.2,710.9 L672.5,708.6 L672.7,707.3 L673.0,706.9 L673.3,707.8 L673.6,710.0 L673.8,713.3 L674.1,717.5 L674.4,722.4 L674.7,727.6 L674.9,732.5 L675.2,736.7 L675.5,740.0 L675.8,742.1 L676.0,742.8 L676.3,742.2 L676.6,740.1 L676.9,736.9 L677.1,732.8 L677.4,728.0 L677.7,723.1 L678.0,718.6 L678.2,714.8 L678.5,712.0 L678.8,710.5 L679.0,710.4 L679.3,711.6 L679.6,713.9 L679.9,717.2 L680.1,720.9 L680.4,725.0 L680.7,729.2 L681.0,733.3 L681.2,737.0 L681.5,739.8 L681.8,741.6 L682.1,742.0 L682.3,741.0 L682.6,738.3 L682.9,734.2 L683.2,728.8 L683.4,722.8 L683.7,717.1 L684.0,712.4 L684.3,708.8 L684.5,706.8 L684.8,706.4 L685.1,707.6 L685.3,710.1 L685.6,713.7 L685.9,718.1 L686.2,722.7 L686.4,727.1 L686.7,730.9 L687.0,733.5 L687.3,734.5 L687.5,733.8 L687.8,731.0 L688.1,726.2 L688.4,719.5 L688.6,711.7 L688.9,704.2 L689.2,698.6 L689.5,698.6 L689.7,698.6 L690.0,698.6 L690.3,698.6 L690.6,698.6 L690.8,698.6 L691.1,703.6 L691.4,708.8 L691.6,713.4 L691.9,716.8 L692.2,718.4 L692.5,718.0 L692.7,715.9 L693.0,712.5 L693.3,708.6 L693.6,705.3 L693.8,703.5 L694.1,703.6 L694.4,705.8 L694.7,709.8 L694.9,714.9 L695.2,720.1 L695.5,724.4 L695.8,727.0 L696.0,727.5 L696.3,725.7 L696.6,721.8 L696.9,716.1 L697.1,709.1 L697.4,701.4 L697.7,695.4 L697.9,695.4 L698.2,695.4 L698.5,695.4 L698.8,695.4 L699.0,695.4 L699.3,698.6 L699.6,700.7 L699.9,704.3 L700.1,705.8 L700.4,705.1 L700.7,702.6 L701.0,698.8 L701.2,698.6 L701.5,698.6 L701.8,698.6 L702.1,698.6 L702.3,698.6 L702.6,698.6 L702.9,698.6 L703.1,698.6 L703.4,698.7 L703.7,702.7 L704.0,703.6 L704.2,702.0 L704.5,699.4 L704.8,698.6 L705.1,698.6 L705.3,698.6 L705.6,698.6 L705.9,702.7 L706.2,708.9 L706.4,715.9 L706.7,722.6 L707.0,727.6 L707.3,729.9 L707.5,728.9 L707.8,724.7 L708.1,718.4 L708.4,711.4 L708.6,705.6 L708.9,702.4 L709.2,702.7 L709.4,706.4 L709.7,712.8 L710.0,720.3 L710.3,726.8 L710.5,730.5 L710.8,730.7 L711.1,727.5 L711.4,721.9 L711.6,715.5 L711.9,710.0 L712.2,706.7 L712.5,706.1 L712.7,708.4 L713.0,712.9 L713.3,718.5 L713.6,723.7 L713.8,727.4 L714.1,728.2 L714.4,726.1 L714.7,721.4 L714.9,715.4 L715.2,710.0 L715.5,706.7 L715.7,706.8 L716.0,710.2 L716.3,715.9 L716.6,722.2 L716.8,727.1 L717.1,729.2 L717.4,728.0 L717.7,724.1 L717.9,719.0 L718.2,714.2 L718.5,711.1 L718.8,710.4 L719.0,712.2 L719.3,715.9 L719.6,720.5 L719.9,724.6 L720.1,727.2 L720.4,727.4 L720.7,725.2 L721.0,721.1 L721.2,716.9 L721.5,714.0 L721.8,713.6 L722.0,716.1 L722.3,720.6 L722.6,725.7 L722.9,729.9 L723.1,732.1 L723.4,731.6 L723.7,728.7 L724.0,724.1 L724.2,719.1 L724.5,715.3 L724.8,714.0 L725.1,716.1 L725.3,721.1 L725.6,727.4 L725.9,732.8 L726.2,735.1 L726.4,733.3 L726.7,727.7 L727.0,720.3 L727.3,714.2 L727.5,711.3 L727.8,712.6 L728.1,717.7 L728.3,724.7 L728.6,731.3 L728.9,735.4 L729.2,735.6 L729.4,731.8 L729.7,725.1 L730.0,717.6 L730.3,711.6 L730.5,710.0 L730.8,713.2 L731.1,719.3 L731.4,725.5 L731.6,729.6 L731.9,730.1 L732.2,727.2 L732.5,722.2 L732.7,716.9 L733.0,713.0 L733.3,711.4 L733.6,712.3 L733.8,715.2 L734.1,719.3 L734.4,723.4 L734.6,726.2 L734.9,726.5 L735.2,723.8 L735.5,718.8 L735.7,713.0 L736.0,709.3 L736.3,709.8 L736.6,715.2 L736.8,723.8 L737.1,731.9 L737.4,736.7 L737.7,736.9 L737.9,732.6 L738.2,725.5 L738.5,718.3 L738.8,714.1 L739.0,714.5 L739.3,719.6 L739.6,727.4 L739.8,734.8 L740.1,739.1 L740.4,739.0 L740.7,735.0 L740.9,729.0 L741.2,723.1 L741.5,719.7 L741.8,720.2 L742.0,724.2 L742.3,730.4 L742.6,736.5 L742.9,740.4 L743.1,740.2 L743.4,736.0 L743.7,729.1 L744.0,722.4 L744.2,718.9 L744.5,720.2 L744.8,726.1 L745.1,734.4 L745.3,741.6 L745.6,745.2 L745.9,744.1 L746.1,738.6 L746.4,731.2 L746.7,725.3 L747.0,722.9 L747.2,725.1 L747.5,731.0 L747.8,738.2 L748.1,743.7 L748.3,744.6 L748.6,739.5 L748.9,731.3 L749.2,723.1 L749.4,717.6 L749.7,716.4 L750.0,719.4 L750.3,724.7 L750.5,729.4 L750.8,731.2 L751.1,728.9 L751.4,723.7 L751.6,717.2 L751.9,711.9" fill="none" stroke="#80bf45" stroke-width="0.8" stroke-linejoin="round"/>
<path d="M751.9,711.9 L752.2,710.0 L752.4,711.7 L752.7,715.4 L753.0,719.1 L753.3,720.9 L753.5,720.1 L753.8,717.2 L754.1,713.4 L754.4,710.1 L754.6,708.4 L754.9,708.7 L755.2,711.3 L755.5,715.2 L755.7,719.1 L756.0,720.8 L756.3,718.9 L756.6,713.5 L756.8,707.0 L757.1,702.7 L757.4,704.4 L757.7,710.4 L757.9,717.1 L758.2,721.6 L758.5,722.1 L758.7,718.8 L759.0,713.2 L759.3,708.2 L759.6,706.1 L759.8,707.9 L760.1,712.7 L760.4,718.3 L760.7,722.0 L760.9,722.1 L761.2,719.0 L761.5,714.7 L761.8,711.6 L762.0,711.2 L762.3,713.8 L762.6,718.0 L762.9,721.8 L763.1,723.6 L763.4,722.6 L763.7,719.0 L764.0,714.5 L764.2,711.4 L764.5,711.6 L764.8,715.5 L765.0,721.5 L765.3,726.3 L765.6,727.1 L765.9,723.2 L766.1,716.9 L766.4,711.8 L766.7,711.3 L767.0,715.9 L767.2,723.2 L767.5,729.1 L767.8,730.6 L768.1,727.1 L768.3,721.0 L768.6,715.7 L768.9,714.0 L769.2,716.3 L769.4,720.6 L769.7,724.2 L770.0,724.6 L770.2,721.4 L770.5,716.1 L770.8,711.2 L771.1,708.9 L771.3,710.2 L771.6,714.2 L771.9,718.3 L772.2,719.9 L772.4,717.5 L772.7,712.1 L773.0,706.9 L773.3,705.4 L773.5,709.4 L773.8,716.8 L774.1,723.3 L774.4,724.9 L774.6,720.5 L774.9,712.9 L775.2,707.3 L775.5,707.8 L775.7,714.6 L776.0,723.2 L776.3,728.2 L776.5,727.0 L776.8,720.8 L777.1,714.0 L777.4,711.2 L777.6,714.1 L777.9,720.9 L778.2,727.1 L778.5,728.5 L778.7,724.1 L779.0,716.4 L779.3,710.3 L779.6,710.0 L779.8,716.1 L780.1,722.9 L780.4,725.5 L780.7,722.6 L780.9,717.0 L781.2,712.9 L781.5,712.9 L781.8,716.4 L782.0,720.3 L782.3,722.0 L782.6,720.7 L782.8,717.7 L783.1,715.4 L783.4,715.3 L783.7,717.2 L783.9,719.6 L784.2,720.2 L784.5,718.0 L784.8,714.6 L785.0,712.6 L785.3,714.0 L785.6,717.6 L785.9,720.2 L786.1,719.2 L786.4,715.1 L786.7,712.8 L787.0,716.6 L787.2,719.8 L787.5,718.9 L787.8,718.2 L788.1,719.7 L788.3,718.1 L788.6,713.8 L788.9,714.5 L789.1,722.0 L789.4,720.7 L789.7,710.0 L790.0,708.8 L790.2,719.1 L790.5,720.7 L790.8,710.4 L791.1,709.0 L791.3,719.9 L791.6,717.5 L791.9,709.7 L792.2,707.8 L792.4,717.8 L792.7,718.6 L793.0,710.0 L793.3,709.8 L793.5,718.0 L793.8,720.0 L794.1,707.9 L794.4,710.3 L794.6,721.7 L794.9,722.1 L795.2,713.6 L795.4,714.3 L795.7,722.6 L796.0,723.2 L796.3,714.1 L796.5,715.9 L796.8,725.2 L797.1,724.9 L797.4,717.5 L797.6,713.0 L797.9,727.1 L798.2,728.7 L798.5,717.9 L798.7,715.5 L799.0,726.5 L799.3,728.9 L799.6,717.5 L799.8,717.5 L800.1,724.9 L800.4,726.3 L800.6,717.3 L800.9,715.3 L801.2,723.9 L801.5,725.8 L801.7,713.3 L802.0,712.6 L802.3,720.6 L802.6,723.6 L802.8,712.5 L803.1,710.2 L803.4,719.2 L803.7,718.9 L803.9,708.1 L804.2,708.4 L804.5,718.8 L804.8,717.7 L805.0,707.2 L805.3,709.1 L805.6,720.6 L805.9,715.8 L806.1,705.4 L806.4,707.3 L806.7,718.6 L806.9,718.3 L807.2,705.8 L807.5,707.5 L807.8,719.2 L808.0,721.1 L808.3,710.6 L808.6,709.7 L808.9,722.3 L809.1,726.0 L809.4,714.3 L809.7,714.3 L810.0,724.4 L810.2,724.9 L810.5,711.4 L810.8,717.2 L811.1,725.1 L811.3,725.9 L811.6,716.2 L811.9,717.7 L812.2,726.8 L812.4,726.6 L812.7,717.4 L813.0,718.1 L813.2,727.0 L813.5,729.4 L813.8,718.1 L814.1,716.6 L814.3,727.2 L814.6,725.0 L814.9,715.0 L815.2,713.5 L815.4,722.5 L815.7,727.2 L816.0,713.7 L816.3,710.9 L816.5,722.5 L816.8,723.0 L817.1,710.8 L817.4,709.9 L817.6,718.0 L817.9,717.9 L818.2,709.5 L818.5,706.3 L818.7,719.8 L819.0,716.3 L819.3,707.8 L819.5,705.8 L819.8,716.8 L820.1,717.6 L820.4,708.1 L820.6,709.3 L820.9,718.7 L821.2,718.5 L821.5,708.0 L821.7,708.6 L822.0,718.6 L822.3,720.6 L822.6,712.3 L822.8,713.3 L823.1,720.7 L823.4,721.7 L823.7,711.6 L823.9,715.5 L824.2,723.2 L824.5,725.0 L824.8,717.2 L825.0,717.3 L825.3,725.0 L825.6,725.5 L825.8,716.9 L826.1,716.3 L826.4,728.2 L826.7,726.2 L826.9,716.8 L827.2,718.6 L827.5,726.7 L827.8,727.0 L828.0,717.9 L828.3,717.3 L828.6,724.4 L828.9,727.8 L829.1,716.3 L829.4,715.5 L829.7,723.3 L830.0,722.9 L830.2,713.4 L830.5,712.0 L830.8,721.1 L831.0,721.8 L831.3,710.6 L831.6,709.2 L831.9,719.0 L832.1,721.0 L832.4,708.1 L832.7,708.5 L833.0,717.5 L833.2,716.3 L833.5,708.7 L833.8,707.7 L834.1,718.8 L834.3,717.4 L834.6,707.4 L834.9,706.6 L835.2,718.9 L835.4,719.6 L835.7,707.9 L836.0,710.2 L836.3,722.6 L836.5,721.1 L836.8,708.4 L837.1,713.9 L837.3,722.2 L837.6,722.8 L837.9,714.1 L838.2,712.0 L838.4,723.8 L838.7,724.2 L839.0,716.8 L839.3,717.0 L839.5,727.1 L839.8,728.0 L840.1,718.1 L840.4,718.2 L840.6,726.8 L840.9,729.6 L841.2,717.6 L841.5,717.3 L841.7,725.3 L842.0,727.6 L842.3,716.9 L842.6,715.5 L842.8,725.2 L843.1,724.5 L843.4,714.9 L843.6,709.0 L843.9,725.5 L844.2,721.0 L844.5,711.4 L844.7,713.0 L845.0,719.3 L845.3,720.7 L845.6,711.2 L845.8,710.2 L846.1,719.2 L846.4,719.7 L846.7,709.1 L846.9,704.2 L847.2,715.9 L847.5,717.7 L847.8,708.7 L848.0,705.7 L848.3,717.9 L848.6,720.1 L848.9,708.1 L849.1,709.4 L849.4,720.0 L849.7,718.8 L849.9,709.9 L850.2,712.3 L850.5,720.9 L850.8,720.4 L851.0,712.5 L851.3,713.3 L851.6,721.5 L851.9,722.8 L852.1,718.4 L852.4,719.0 L852.7,726.4 L853.0,727.5 L853.2,722.9 L853.5,722.5 L853.8,724.3 L854.1,722.3 L854.3,718.3 L854.6,717.0 L854.9,718.0 L855.2,718.4 L855.4,718.7 L855.7,720.7 L856.0,724.9 L856.2,727.4 L856.5,727.1 L856.8,727.1 L857.1,728.0 L857.3,726.4 L857.6,723.0 L857.9,720.0 L858.2,719.6 L858.4,718.1 L858.7,716.2 L859.0,717.0 L859.3,720.1 L859.5,722.0 L859.8,723.3 L860.1,725.2 L860.4,727.7 L860.6,728.3 L860.9,726.0 L861.2,723.8 L861.4,723.2 L861.7,720.5 L862.0,717.3 L862.3,716.1 L862.5,717.7 L862.8,718.0 L863.1,718.6 L863.4,721.2 L863.6,725.1 L863.9,727.1 L864.2,726.7 L864.5,726.8 L864.7,727.3 L865.0,725.4 L865.3,721.6 L865.6,719.4 L865.8,719.5 L866.1,718.9 L866.4,717.8 L866.7,719.2 L866.9,723.2 L867.2,725.3 L867.5,726.3 L867.7,727.7 L868.0,730.0 L868.3,729.8 L868.6,726.4 L868.8,724.5 L869.1,723.7 L869.4,721.8 L869.7,719.4 L869.9,719.2 L870.2,721.8 L870.5,723.7 L870.8,724.9 L871.0,727.4 L871.3,730.4 L871.6,731.4 L871.9,730.0 L872.1,728.5 L872.4,728.5 L872.7,726.0 L873.0,723.1 L873.2,721.9 L873.5,723.4 L873.8,723.8 L874.0,724.5 L874.3,727.1 L874.6,730.8 L874.9,733.2 L875.1,732.9 L875.4,733.1 L875.7,733.4 L876.0,731.7 L876.2,728.3 L876.5,726.3 L876.8,726.7 L877.1,726.4 L877.3,725.8 L877.6,728.0 L877.9,731.4 L878.2,734.5 L878.4,735.1 L878.7,736.4 L879.0,737.7 L879.3,736.9 L879.5,733.7 L879.8,731.5 L880.1,730.9 L880.3,729.4 L880.6,727.6 L880.9,727.8 L881.2,730.8 L881.4,732.8 L881.7,733.7 L882.0,735.3 L882.3,736.9 L882.5,736.7 L882.8,733.9 L883.1,731.7 L883.4,730.5 L883.6,728.1 L883.9,725.6 L884.2,725.1 L884.5,727.2 L884.7,729.0 L885.0,729.8 L885.3,731.9 L885.6,734.5 L885.8,734.6 L886.1,732.5 L886.4,730.8 L886.6,729.7 L886.9,727.4 L887.2,724.5 L887.5,723.4 L887.7,724.9 L888.0,725.8 L888.3,726.2 L888.6,728.5 L888.8,731.5 L889.1,732.2 L889.4,730.6 L889.7,729.4 L889.9,728.5 L890.2,726.5 L890.5,723.4 L890.8,722.1 L891.0,723.1 L891.3,723.9 L891.6,724.6 L891.8,726.3 L892.1,729.0 L892.4,730.1 L892.7,729.3 L892.9,728.6 L893.2,728.5 L893.5,726.1 L893.8,723.1 L894.0,721.9 L894.3,722.5 L894.6,723.3 L894.9,723.4 L895.1,725.3 L895.4,727.8 L895.7,728.8 L896.0,728.1 L896.2,727.5 L896.5,726.9 L896.8,725.5 L897.1,722.3 L897.3,721.5 L897.6,722.0 L897.9,722.5 L898.1,722.8 L898.4,724.5 L898.7,726.7 L899.0,727.8 L899.2,727.0 L899.5,726.1 L899.8,725.5 L900.1,724.0 L900.3,721.8 L900.6,720.7 L900.9,721.5 L901.2,722.1 L901.4,722.5 L901.7,724.0 L902.0,726.1 L902.3,726.7 L902.5,725.9 L902.8,724.9 L903.1,724.0 L903.4,722.4 L903.6,720.4 L903.9,720.1 L904.2,720.9 L904.4,722.1 L904.7,722.7 L905.0,724.2 L905.3,726.0 L905.5,726.0 L905.8,724.6 L906.1,723.3 L906.4,722.4 L906.6,721.2 L906.9,719.7 L907.2,719.6 L907.5,721.3 L907.7,722.8 L908.0,723.4 L908.3,724.2 L908.6,725.4 L908.8,725.0 L909.1,722.8 L909.4,721.3 L909.7,720.6 L909.9,719.9 L910.2,719.3 L910.5,720.2 L910.7,722.1 L911.0,723.7 L911.3,723.9 L911.6,723.9 L911.8,724.1 L912.1,722.9 L912.4,720.6 L912.7,719.4 L912.9,719.4 L913.2,719.5 L913.5,719.8 L913.8,721.1 L914.0,723.4 L914.3,724.0 L914.6,723.4 L914.9,722.6 L915.1,721.9 L915.4,720.4 L915.7,718.7 L916.0,718.4 L916.2,719.5 L916.5,720.8 L916.8,721.8 L917.0,723.0 L917.3,724.0 L917.6,723.8 L917.9,722.1 L918.1,720.8 L918.4,720.1 L918.7,719.6 L919.0,719.3 L919.2,720.4 L919.5,722.4 L919.8,723.6 L920.1,723.9 L920.3,723.6 L920.6,723.5 L920.9,722.2 L921.2,720.3 L921.4,719.6 L921.7,720.3 L922.0,721.3 L922.2,722.1 L922.5,723.4 L922.8,724.8 L923.1,724.9 L923.3,723.5 L923.6,722.2 L923.9,721.5 L924.2,721.0 L924.4,720.3 L924.7,721.2 L925.0,723.2 L925.3,724.5 L925.5,724.4 L925.8,724.6 L926.1,724.3 L926.4,723.0 L926.6,721.3 L926.9,720.8 L927.2,721.5 L927.5,722.5 L927.7,723.5 L928.0,724.9 L928.3,726.4 L928.5,726.2 L928.8,724.7 L929.1,723.4 L929.4,723.1 L929.6,722.7 L929.9,723.1 L930.2,724.8 L930.5,727.3 L930.7,728.9 L931.0,728.6 L931.3,727.7 L931.6,727.1 L931.8,725.8 L932.1,723.8 L932.4,724.4 L932.7,726.6 L932.9,728.9 L933.2,730.1 L933.5,731.1 L933.8,731.6 L934.0,730.2 L934.3,727.4 L934.6,726.1 L934.8,727.3 L935.1,729.4 L935.4,728.7 L935.7,730.2 L935.9,733.9 L936.2,734.3 L936.5,731.0 L936.8,729.2 L937.0,732.2 L937.3,732.2 L937.6,722.5 L937.9,718.3 L938.1,738.1 L938.4,737.9 L938.7,726.7 L939.0,722.0 L939.2,741.1 L939.5,741.9 L939.8,711.0 L940.1,711.8 L940.3,743.5 L940.6,744.6 L940.9,715.0 L941.1,701.6 L941.4,744.1 L941.7,745.5 L942.0,722.8 L942.2,724.3 L942.5,746.3 L942.8,747.4 L943.1,720.7 L943.3,703.3 L943.6,745.3 L943.9,746.7 L944.2,704.4 L944.4,722.0 L944.7,745.6 L945.0,745.8 L945.3,708.6 L945.5,726.7 L945.8,749.5 L946.1,749.1 L946.4,726.1 L946.6,712.4 L946.9,747.6 L947.2,747.4 L947.4,712.8 L947.7,728.9 L948.0,749.0 L948.3,747.7 L948.5,721.4 L948.8,693.3 L949.1,747.1 L949.4,748.9 L949.6,712.1 L949.9,717.6 L950.2,747.4 L950.5,748.8 L950.7,724.4 L951.0,716.0 L951.3,750.4 L951.6,749.6 L951.8,712.8 L952.1,719.9 L952.4,748.3 L952.6,748.9 L952.9,725.7 L953.2,723.0 L953.5,749.4 L953.7,751.1 L954.0,724.5 L954.3,723.8 L954.6,753.0 L954.8,751.6 L955.1,705.9 L955.4,725.1 L955.7,752.7 L955.9,754.5 L956.2,735.1 L956.5,732.7 L956.8,754.2 L957.0,754.7 L957.3,728.1 L957.6,732.4 L957.9,754.9 L958.1,755.1 L958.4,738.9 L958.7,741.8 L958.9,753.7 L959.2,753.6 L959.5,746.4 L959.8,747.4 L960.0,753.5 L960.3,753.3 L960.6,748.1 L960.9,748.8 L961.1,754.1 L961.4,753.7 L961.7,750.3 L962.0,751.0 L962.2,754.9 L962.5,755.5 L962.8,751.6 L963.1,751.8 L963.3,755.1 L963.6,755.4 L963.9,752.7 L964.2,752.8 L964.4,755.7 L964.7,756.9" fill="none" stroke="#76b932" stroke-width="1.05" stroke-linejoin="round"/>
<path d="M472.0,637.5 L584.0,658.5 L798.1,658.5 L798.1,650.1 L964.7,650.1" fill="none" stroke="#a52a3c" stroke-width="1.6"/>
<path d="M472.0,658.5 L584.0,679.6 L798.1,679.6 L798.1,671.2 L964.7,671.2" fill="none" stroke="#d2963c" stroke-width="1.6"/>
<line x1="492.8" y1="664.9" x2="492.8" y2="776.5" stroke="#587a4a" stroke-width="1"/>
<line x1="492.8" y1="650.1" x2="492.8" y2="664.9" stroke="#4a5a9c" stroke-width="1"/>
<line x1="516.7" y1="690.1" x2="516.7" y2="776.5" stroke="#587a4a" stroke-width="1"/>
<line x1="516.7" y1="671.2" x2="516.7" y2="690.1" stroke="#4a5a9c" stroke-width="1"/>
<line x1="535.6" y1="694.4" x2="535.6" y2="776.5" stroke="#587a4a" stroke-width="1"/>
<line x1="535.6" y1="679.6" x2="535.6" y2="694.4" stroke="#4a5a9c" stroke-width="1"/>
<line x1="615.8" y1="695.4" x2="615.8" y2="776.5" stroke="#587a4a" stroke-width="1"/>
<line x1="615.8" y1="689.1" x2="615.8" y2="695.4" stroke="#4a5a9c" stroke-width="1"/>
<line x1="626.1" y1="681.7" x2="626.1" y2="776.5" stroke="#587a4a" stroke-width="1"/>
<line x1="626.1" y1="677.5" x2="626.1" y2="681.7" stroke="#4a5a9c" stroke-width="1"/>
<line x1="635.0" y1="690.1" x2="635.0" y2="776.5" stroke="#587a4a" stroke-width="1"/>
<line x1="635.0" y1="685.9" x2="635.0" y2="690.1" stroke="#4a5a9c" stroke-width="1"/>
<line x1="643.9" y1="697.5" x2="643.9" y2="776.5" stroke="#587a4a" stroke-width="1"/>
<line x1="643.9" y1="692.2" x2="643.9" y2="697.5" stroke="#4a5a9c" stroke-width="1"/>
<line x1="690.8" y1="698.6" x2="690.8" y2="776.5" stroke="#587a4a" stroke-width="1"/>
<line x1="690.8" y1="693.3" x2="690.8" y2="698.6" stroke="#4a5a9c" stroke-width="1"/>
<line x1="699.2" y1="695.4" x2="699.2" y2="776.5" stroke="#587a4a" stroke-width="1"/>
<line x1="699.2" y1="690.1" x2="699.2" y2="695.4" stroke="#4a5a9c" stroke-width="1"/>
<line x1="703.3" y1="698.6" x2="703.3" y2="776.5" stroke="#587a4a" stroke-width="1"/>
<line x1="703.3" y1="692.2" x2="703.3" y2="698.6" stroke="#4a5a9c" stroke-width="1"/>
<path d="M488.0,664.9 L492.8,660.1 L497.6,664.9 L492.8,669.7 Z" fill="rgba(255,255,255,0.55)" stroke="#78ad66" stroke-width="0.9"/>
<path d="M488.0,650.1 L492.8,645.3 L497.6,650.1 L492.8,654.9 Z" fill="rgba(255,255,255,0.55)" stroke="#7868ae" stroke-width="0.9"/>
<path d="M511.9,690.1 L516.7,685.3 L521.5,690.1 L516.7,694.9 Z" fill="rgba(255,255,255,0.55)" stroke="#78ad66" stroke-width="0.9"/>
<path d="M511.9,671.2 L516.7,666.4 L521.5,671.2 L516.7,676.0 Z" fill="rgba(255,255,255,0.55)" stroke="#7868ae" stroke-width="0.9"/>
<path d="M530.8,694.4 L535.6,689.6 L540.4,694.4 L535.6,699.2 Z" fill="rgba(255,255,255,0.55)" stroke="#78ad66" stroke-width="0.9"/>
<path d="M530.8,679.6 L535.6,674.8 L540.4,679.6 L535.6,684.4 Z" fill="rgba(255,255,255,0.55)" stroke="#7868ae" stroke-width="0.9"/>
<path d="M611.0,695.4 L615.8,690.6 L620.6,695.4 L615.8,700.2 Z" fill="rgba(255,255,255,0.55)" stroke="#78ad66" stroke-width="0.9"/>
<path d="M611.0,689.1 L615.8,684.3 L620.6,689.1 L615.8,693.9 Z" fill="rgba(255,255,255,0.55)" stroke="#7868ae" stroke-width="0.9"/>
<path d="M621.3,681.7 L626.1,676.9 L630.9,681.7 L626.1,686.5 Z" fill="rgba(255,255,255,0.55)" stroke="#78ad66" stroke-width="0.9"/>
<path d="M621.3,677.5 L626.1,672.7 L630.9,677.5 L626.1,682.3 Z" fill="rgba(255,255,255,0.55)" stroke="#7868ae" stroke-width="0.9"/>
<path d="M630.2,690.1 L635.0,685.3 L639.8,690.1 L635.0,694.9 Z" fill="rgba(255,255,255,0.55)" stroke="#78ad66" stroke-width="0.9"/>
<path d="M630.2,685.9 L635.0,681.1 L639.8,685.9 L635.0,690.7 Z" fill="rgba(255,255,255,0.55)" stroke="#7868ae" stroke-width="0.9"/>
<path d="M639.1,697.5 L643.9,692.7 L648.7,697.5 L643.9,702.3 Z" fill="rgba(255,255,255,0.55)" stroke="#78ad66" stroke-width="0.9"/>
<path d="M639.1,692.2 L643.9,687.5 L648.7,692.2 L643.9,697.0 Z" fill="rgba(255,255,255,0.55)" stroke="#7868ae" stroke-width="0.9"/>
<path d="M686.0,698.6 L690.8,693.8 L695.6,698.6 L690.8,703.4 Z" fill="rgba(255,255,255,0.55)" stroke="#78ad66" stroke-width="0.9"/>
<path d="M686.0,693.3 L690.8,688.5 L695.6,693.3 L690.8,698.1 Z" fill="rgba(255,255,255,0.55)" stroke="#7868ae" stroke-width="0.9"/>
<path d="M694.4,695.4 L699.2,690.6 L704.0,695.4 L699.2,700.2 Z" fill="rgba(255,255,255,0.55)" stroke="#78ad66" stroke-width="0.9"/>
<path d="M694.4,690.1 L699.2,685.3 L704.0,690.1 L699.2,694.9 Z" fill="rgba(255,255,255,0.55)" stroke="#7868ae" stroke-width="0.9"/>
<path d="M698.5,698.6 L703.3,693.8 L708.1,698.6 L703.3,703.4 Z" fill="rgba(255,255,255,0.55)" stroke="#78ad66" stroke-width="0.9"/>
<path d="M698.5,692.2 L703.3,687.5 L708.1,692.2 L703.3,697.0 Z" fill="rgba(255,255,255,0.55)" stroke="#7868ae" stroke-width="0.9"/>
<text x="460.0" y="617.7" font-size="9.5" fill="#222" text-anchor="end">80</text>
<text x="460.0" y="653.5" font-size="9.5" fill="#222" text-anchor="end">60</text>
<text x="460.0" y="695.6" font-size="9.5" fill="#222" text-anchor="end">40</text>
<text x="460.0" y="737.8" font-size="9.5" fill="#222" text-anchor="end">20</text>
<text x="460.0" y="779.9" font-size="9.5" fill="#222" text-anchor="end">0</text>
<text transform="translate(440,641.5) rotate(-90)" font-size="9.5" fill="#222" text-anchor="middle" textLength="55" lengthAdjust="spacingAndGlyphs">Level in dBµV</text>
<text x="472.0" y="797.0" font-size="9" fill="#222" text-anchor="middle">150 k</text>
<text x="498.8" y="795.0" font-size="9" fill="#222" text-anchor="middle">200 k</text>
<text x="536.5" y="795.0" font-size="9" fill="#222" text-anchor="middle">300 k</text>
<text x="563.2" y="795.0" font-size="9" fill="#222" text-anchor="middle">400 k</text>
<text x="600.9" y="795.0" font-size="9" fill="#222" text-anchor="middle">600 k</text>
<text x="648.4" y="797.0" font-size="9" fill="#222" text-anchor="middle">1 M</text>
<text x="712.9" y="795.0" font-size="9" fill="#222" text-anchor="middle">2 M</text>
<text x="750.6" y="795.0" font-size="9" fill="#222" text-anchor="middle">3 M</text>
<text x="777.3" y="795.0" font-size="9" fill="#222" text-anchor="middle">4 M</text>
<text x="798.1" y="795.0" font-size="9" fill="#222" text-anchor="middle">5 M</text>
<text x="829.4" y="795.0" font-size="9" fill="#222" text-anchor="middle">7 M</text>
<text x="862.5" y="797.0" font-size="9" fill="#222" text-anchor="middle">10 M</text>
<text x="927.0" y="795.0" font-size="9" fill="#222" text-anchor="middle">20 M</text>
<text x="953.5" y="797.0" font-size="9" fill="#222" text-anchor="middle">30 M</text>
<text x="965" y="809" font-size="9.5" fill="#222" text-anchor="end">Frequency in Hz</text>
<text x="722" y="626" font-size="14.5" fill="#444" text-anchor="middle">Overview</text>
<path d="M477.2,820.4 l2.2,-2.2 l2.2,2.2 l-2.2,2.2 Z" fill="none" stroke="#b9b08a" stroke-width="0.7"/>
<text x="485.0" y="822.5" font-size="6" fill="#111" stroke="#111" stroke-width="0.12" textLength="68.4" lengthAdjust="spacingAndGlyphs">CAV Level@Final Result</text>
<path d="M610.1,820.4 q2.2,-5.5 4.4,0 t4.4,0" fill="none" stroke="#d3dcb0" stroke-width="1"/>
<text x="620.5" y="822.5" font-size="6" fill="#111" stroke="#111" stroke-width="0.12" textLength="60.0" lengthAdjust="spacingAndGlyphs">CAV Level@Overview</text>
<path d="M745.1,820.4 q2.2,-5.5 4.4,0 t4.4,0" fill="none" stroke="#b83246" stroke-width="1"/>
<text x="755.4" y="822.5" font-size="6" fill="#111" stroke="#111" stroke-width="0.12" textLength="102.0" lengthAdjust="spacingAndGlyphs">Limit 1@EN 55022 Voltage on Mains</text>
<path d="M475.2,832.2 q2.2,-5.5 4.4,0 t4.4,0" fill="none" stroke="#d2963c" stroke-width="1"/>
<text x="486.0" y="834.3" font-size="6" fill="#111" stroke="#111" stroke-width="0.12" textLength="102.0" lengthAdjust="spacingAndGlyphs">Limit 2@EN 55022 Voltage on Mains</text>
<path d="M612.6,832.2 l2.2,-2.2 l2.2,2.2 l-2.2,2.2 Z" fill="none" stroke="#8a8ab0" stroke-width="0.7"/>
<text x="620.5" y="834.3" font-size="6" fill="#111" stroke="#111" stroke-width="0.12" textLength="68.4" lengthAdjust="spacingAndGlyphs">QPK Level@Final Result</text>
<path d="M745.1,832.2 q2.2,-5.5 4.4,0 t4.4,0" fill="none" stroke="#cbd6de" stroke-width="1"/>
<text x="755.4" y="834.3" font-size="6" fill="#111" stroke="#111" stroke-width="0.12" textLength="60.0" lengthAdjust="spacingAndGlyphs">QPK Level@Overview</text>
</svg>

</div>
</body>
</html>
